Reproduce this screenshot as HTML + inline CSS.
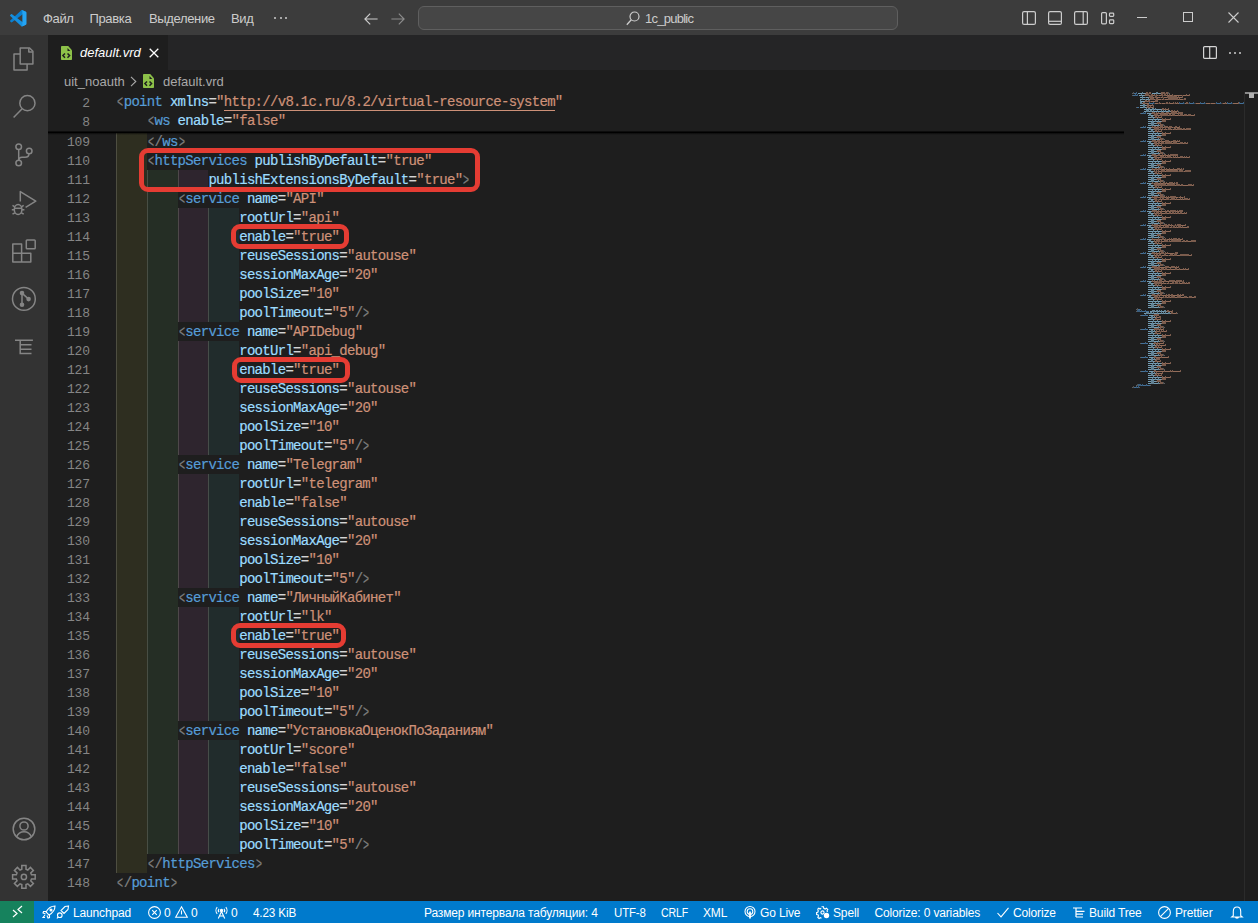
<!DOCTYPE html>
<html><head><meta charset="utf-8"><title>default.vrd</title><style>
*{box-sizing:border-box}
body{margin:0;width:1258px;height:923px;overflow:hidden;background:#1e1e1e;position:relative;font-family:"Liberation Sans",sans-serif}
.a{position:absolute}
.ui{position:absolute;white-space:nowrap;font-family:"Liberation Sans",sans-serif}
.cd{position:absolute;left:116px;-webkit-text-stroke:0.2px currentColor;white-space:pre;font:14px/19px "Liberation Mono",monospace;letter-spacing:-0.703px;color:#d4d4d4}
.ln{position:absolute;left:47px;width:43px;text-align:right;font:13px/19px "Liberation Mono",monospace;letter-spacing:-0.103px;color:#858585;white-space:pre}
.g{font-style:normal;display:inline-block;transform:translateY(0.7px) scale(0.72,1.2)}
.rb{position:absolute;border:5px solid #e53c33;border-radius:9px}
svg{position:absolute;overflow:visible}
</style></head><body>

<div class="a" style="left:0;top:0;width:1258px;height:35px;background:#3c3c3c"></div>
<svg style="left:10px;top:10px" width="16.5" height="16.5" viewBox="0 0 100 100">
<path d="M96.46 10.8L75.86 0.87C73.48 -0.28 70.63 0.2 68.76 2.07L1.36 63.58C-0.45 65.24 -0.45 68.1 1.37 69.75L6.88 74.76C8.36 76.1 10.6 76.2 12.19 74.99L93.39 13.39C96.1 11.33 100 13.27 100 16.68V16.44C100 14.04 98.62 11.84 96.46 10.8Z" fill="#0a7fd0"/>
<path d="M96.46 89.2L75.86 99.12C73.48 100.27 70.63 99.78 68.76 97.92L1.36 36.42C-0.45 34.76 -0.45 31.9 1.37 30.25L6.88 25.24C8.36 23.9 10.6 23.8 12.19 25.01L93.39 86.61C96.1 88.67 100 86.73 100 83.32V83.56C100 85.96 98.62 88.16 96.46 89.2Z" fill="#1590e0"/>
<path d="M75.86 99.13C73.48 100.27 70.63 99.79 68.76 97.92C71.07 100.22 75 98.59 75 95.33V4.67C75 1.41 71.07 -0.22 68.76 2.08C70.63 0.21 73.48 -0.27 75.86 0.87L96.46 10.78C98.62 11.82 100 14.01 100 16.41V83.59C100 85.99 98.62 88.18 96.46 89.22L75.86 99.13Z" fill="#24a4f4"/>
</svg>
<div class="ui" style="left:43px;top:10px;font-size:13px;line-height:18px;color:#cccccc;letter-spacing:-0.35px">Файл</div>
<div class="ui" style="left:89.5px;top:10px;font-size:13px;line-height:18px;color:#cccccc;letter-spacing:-0.35px">Правка</div>
<div class="ui" style="left:149px;top:10px;font-size:13px;line-height:18px;color:#cccccc;letter-spacing:-0.35px">Выделение</div>
<div class="ui" style="left:231px;top:10px;font-size:13px;line-height:18px;color:#cccccc;letter-spacing:-0.35px">Вид</div>
<div class="a" style="left:274px;top:17px;width:2px;height:2px;background:#cccccc;border-radius:1px"></div>
<div class="a" style="left:279.5px;top:17px;width:2px;height:2px;background:#cccccc;border-radius:1px"></div>
<div class="a" style="left:285px;top:17px;width:2px;height:2px;background:#cccccc;border-radius:1px"></div>
<svg style="left:364px;top:12.5px" width="14" height="12" viewBox="0 0 14 12"><path d="M0.9 6H13.6 M6.2 0.7L0.9 6L6.2 11.3" stroke="#cccccc" stroke-width="1.15" fill="none"/></svg>
<svg style="left:390.5px;top:12.5px" width="14" height="12" viewBox="0 0 14 12"><path d="M0.4 6H13.1 M7.8 0.7L13.1 6L7.8 11.3" stroke="#8c8c8c" stroke-width="1.15" fill="none"/></svg>
<div class="a" style="left:418px;top:6px;width:480px;height:24px;background:#464646;border:1px solid #5f5f5f;border-radius:6px"></div>
<svg style="left:626px;top:11px" width="14" height="15" viewBox="0 0 14 15"><circle cx="8.5" cy="5.5" r="4.5" stroke="#cccccc" stroke-width="1.2" fill="none"/><path d="M5.3 8.8L0.8 13.8" stroke="#cccccc" stroke-width="1.3"/></svg>
<div class="ui" style="left:645px;top:10px;font-size:13px;line-height:18px;color:#cccccc;letter-spacing:-0.75px">1c_public</div>
<svg style="left:1022px;top:11px" width="14" height="14" viewBox="0 0 14 14" fill="none" stroke="#cccccc" stroke-width="1.2"><rect x="0.6" y="0.6" width="12.8" height="12.8" rx="1.5"/><path d="M5.4 0.6V13.4"/></svg>
<svg style="left:1048px;top:11px" width="14" height="14" viewBox="0 0 14 14" fill="none" stroke="#cccccc" stroke-width="1.2"><rect x="0.6" y="0.6" width="12.8" height="12.8" rx="1.5"/><path d="M0.6 10.3H13.4"/></svg>
<svg style="left:1074px;top:11px" width="14" height="14" viewBox="0 0 14 14" fill="none" stroke="#cccccc" stroke-width="1.2"><rect x="0.6" y="0.6" width="12.8" height="12.8" rx="1.5"/><path d="M9.2 0.6V13.4"/></svg>
<svg style="left:1101px;top:11px" width="14" height="14" viewBox="0 0 14 14" fill="none" stroke="#cccccc" stroke-width="1.2"><rect x="0.6" y="1.6" width="4.8" height="11.2" rx="1"/><rect x="8.5" y="2.1" width="4.2" height="3.2" rx="0.8"/><rect x="8.5" y="8.8" width="4.2" height="3.8" rx="0.8"/></svg>
<div class="a" style="left:1137px;top:17px;width:10px;height:1px;background:#cccccc"></div>
<div class="a" style="left:1183px;top:12px;width:10px;height:10px;border:1px solid #cccccc"></div>
<svg style="left:1228px;top:12px" width="11" height="11" viewBox="0 0 11 11"><path d="M0.5 0.5L10.5 10.5M10.5 0.5L0.5 10.5" stroke="#cccccc" stroke-width="1.1"/></svg>
<div class="a" style="left:0;top:35px;width:48px;height:866px;background:#333333"></div>
<svg style="left:0;top:0" width="48" height="923" viewBox="0 0 48 923" fill="none" stroke="#858585" stroke-width="1.5" stroke-linejoin="round"><path d="M20.2 48H29.6L32.9 51.3V64H20.2Z"/><path d="M28.8 48.2V52H32.7"/><path d="M20.2 54.1H14V69.9H27.1V64"/><circle cx="27.4" cy="103.2" r="7.6"/><path d="M21.9 108.9L13.6 117.6"/><circle cx="18.7" cy="146.7" r="2.8"/><circle cx="29.2" cy="151" r="2.8"/><circle cx="18.7" cy="163" r="2.8"/><path d="M18.7 149.5V160.2"/><path d="M29 153.8C29 156.5 27.5 157.3 25 157.3H22C20 157.3 18.9 158.3 18.8 160"/><path d="M20.3 201.5V191.6L35.8 201.2L25.6 207.3"/><ellipse cx="18.1" cy="209.5" rx="3.8" ry="5"/><path d="M14.3 208.3H21.9"/><path d="M11.8 209.8H14.3 M21.9 209.8H24.4 M12.5 205.4L14.8 206.8 M23.7 205.4L21.4 206.8 M12.5 214.2L14.8 212.8 M23.7 214.2L21.4 212.8"/><rect x="26.3" y="240" width="8.9" height="8.8" rx="0.8"/><path d="M12.8 244.1H21.6V253.3H30.8V262H12.8Z M12.8 253.3H21.6V262"/><circle cx="23.9" cy="298.9" r="11.4"/><path d="M22 293.1V304.8 M22 293.1L28.6 299.1"/></svg>
<svg style="left:0;top:0" width="48" height="923" viewBox="0 0 48 923" fill="#858585"><circle cx="22" cy="293.1" r="2.3"/><circle cx="28.6" cy="299.1" r="2.3"/><circle cx="22" cy="304.8" r="2.3"/></svg>
<svg style="left:0;top:0" width="48" height="923" viewBox="0 0 48 923" fill="none" stroke="#858585" stroke-width="1.5"><path d="M15 340.3H32.9 M20.2 340.3V354.2 M20.2 344.8H31.5 M20.2 349.3H31.5 M20.2 353.6H31.5"/><circle cx="24" cy="829" r="10.8"/><circle cx="24" cy="826" r="4.1"/><path d="M16.5 837C18 833.3 21 831.8 24 831.8C27 831.8 30 833.3 31.5 837"/><polygon stroke-linejoin="miter" points="21.80,869.30 21.80,865.60 26.00,865.60 26.00,869.30 27.79,870.04 30.41,867.42 33.38,870.39 30.76,873.01 31.50,874.80 35.20,874.80 35.20,879.00 31.50,879.00 30.76,880.79 33.38,883.41 30.41,886.38 27.79,883.76 26.00,884.50 26.00,888.20 21.80,888.20 21.80,884.50 20.01,883.76 17.39,886.38 14.42,883.41 17.04,880.79 16.30,879.00 12.60,879.00 12.60,874.80 16.30,874.80 17.04,873.01 14.42,870.39 17.39,867.42 20.01,870.04"/><circle cx="23.9" cy="876.9" r="2.6"/></svg>
<div class="a" style="left:48px;top:35px;width:1210px;height:35px;background:#252526"></div>
<div class="a" style="left:48px;top:35px;width:120px;height:35px;background:#1e1e1e"></div>
<svg style="left:60.5px;top:46px" width="11" height="14" viewBox="0 0 11 14">
<path d="M0 0.8Q0 0 0.8 0H7.2L11 4.2V13.2Q11 14 10.2 14H0.8Q0 14 0 13.2Z" fill="#8dc149"/>
<path d="M6.5 2.1V4.9H9.3Z" fill="#1e1e1e"/>
<path d="M4 7.4L1.9 9.6L4 11.8 M6.5 7.4L8.6 9.6L6.5 11.8" stroke="#1e1e1e" stroke-width="1.5" fill="none"/></svg>
<div class="ui" style="left:80px;top:44px;font-size:13px;line-height:18px;color:#ffffff;font-style:italic">default.vrd</div>
<svg style="left:149px;top:48px" width="10" height="10" viewBox="0 0 10 10"><path d="M0.7 0.7L9.3 9.3M9.3 0.7L0.7 9.3" stroke="#ffffff" stroke-width="1.3"/></svg>
<svg style="left:1203px;top:46px" width="14" height="13" viewBox="0 0 14 13" fill="none" stroke="#d4d4d4" stroke-width="1.2">
<rect x="0.6" y="0.6" width="12.8" height="11.8" rx="1"/><path d="M6.7 0.6V12.4"/></svg>
<div class="a" style="left:1229px;top:52px;width:2px;height:2px;background:#cccccc;border-radius:1px"></div>
<div class="a" style="left:1234px;top:52px;width:2px;height:2px;background:#cccccc;border-radius:1px"></div>
<div class="a" style="left:1239px;top:52px;width:2px;height:2px;background:#cccccc;border-radius:1px"></div>
<div class="ui" style="left:64px;top:72.5px;font-size:13px;line-height:18px;color:#a9a9a9">uit_noauth</div>
<svg style="left:130px;top:76px" width="7" height="11" viewBox="0 0 7 11"><path d="M1 0.8L5.8 5.5L1 10.2" stroke="#a9a9a9" stroke-width="1.1" fill="none"/></svg>
<svg style="left:143px;top:74px" width="11" height="14" viewBox="0 0 11 14">
<path d="M0 0.8Q0 0 0.8 0H7.2L11 4.2V13.2Q11 14 10.2 14H0.8Q0 14 0 13.2Z" fill="#8dc149"/>
<path d="M6.5 2.1V4.9H9.3Z" fill="#1e1e1e"/>
<path d="M4 7.4L1.9 9.6L4 11.8 M6.5 7.4L8.6 9.6L6.5 11.8" stroke="#1e1e1e" stroke-width="1.5" fill="none"/></svg>
<div class="ui" style="left:163px;top:72.5px;font-size:13px;line-height:18px;color:#a9a9a9">default.vrd</div>
<div class="a" style="left:116.00px;top:131.50px;width:30.79px;height:19px;background:#2e2e20"></div>
<div class="a" style="left:116.00px;top:131.50px;width:1px;height:19px;background:rgba(135,135,125,0.36)"></div>
<div class="a" style="left:116.00px;top:150.50px;width:30.79px;height:19px;background:#2e2e20"></div>
<div class="a" style="left:116.00px;top:150.50px;width:1px;height:19px;background:rgba(135,135,125,0.36)"></div>
<div class="a" style="left:116.00px;top:169.50px;width:30.79px;height:19px;background:#2e2e20"></div>
<div class="a" style="left:116.00px;top:169.50px;width:1px;height:19px;background:rgba(135,135,125,0.36)"></div>
<div class="a" style="left:146.79px;top:169.50px;width:30.79px;height:19px;background:#252e25"></div>
<div class="a" style="left:146.79px;top:169.50px;width:1px;height:19px;background:rgba(135,135,125,0.36)"></div>
<div class="a" style="left:177.58px;top:169.50px;width:30.79px;height:19px;background:#2e252e"></div>
<div class="a" style="left:177.58px;top:169.50px;width:1px;height:19px;background:rgba(135,135,125,0.36)"></div>
<div class="a" style="left:116.00px;top:188.50px;width:30.79px;height:19px;background:#2e2e20"></div>
<div class="a" style="left:116.00px;top:188.50px;width:1px;height:19px;background:rgba(135,135,125,0.36)"></div>
<div class="a" style="left:146.79px;top:188.50px;width:30.79px;height:19px;background:#252e25"></div>
<div class="a" style="left:146.79px;top:188.50px;width:1px;height:19px;background:rgba(135,135,125,0.36)"></div>
<div class="a" style="left:116.00px;top:207.50px;width:30.79px;height:19px;background:#2e2e20"></div>
<div class="a" style="left:116.00px;top:207.50px;width:1px;height:19px;background:rgba(135,135,125,0.36)"></div>
<div class="a" style="left:146.79px;top:207.50px;width:30.79px;height:19px;background:#252e25"></div>
<div class="a" style="left:146.79px;top:207.50px;width:1px;height:19px;background:rgba(135,135,125,0.36)"></div>
<div class="a" style="left:177.58px;top:207.50px;width:30.79px;height:19px;background:#2e252e"></div>
<div class="a" style="left:177.58px;top:207.50px;width:1px;height:19px;background:rgba(135,135,125,0.36)"></div>
<div class="a" style="left:208.36px;top:207.50px;width:30.79px;height:19px;background:#212c2c"></div>
<div class="a" style="left:208.36px;top:207.50px;width:1px;height:19px;background:rgba(135,135,125,0.36)"></div>
<div class="a" style="left:116.00px;top:226.50px;width:30.79px;height:19px;background:#2e2e20"></div>
<div class="a" style="left:116.00px;top:226.50px;width:1px;height:19px;background:rgba(135,135,125,0.36)"></div>
<div class="a" style="left:146.79px;top:226.50px;width:30.79px;height:19px;background:#252e25"></div>
<div class="a" style="left:146.79px;top:226.50px;width:1px;height:19px;background:rgba(135,135,125,0.36)"></div>
<div class="a" style="left:177.58px;top:226.50px;width:30.79px;height:19px;background:#2e252e"></div>
<div class="a" style="left:177.58px;top:226.50px;width:1px;height:19px;background:rgba(135,135,125,0.36)"></div>
<div class="a" style="left:208.36px;top:226.50px;width:30.79px;height:19px;background:#212c2c"></div>
<div class="a" style="left:208.36px;top:226.50px;width:1px;height:19px;background:rgba(135,135,125,0.36)"></div>
<div class="a" style="left:116.00px;top:245.50px;width:30.79px;height:19px;background:#2e2e20"></div>
<div class="a" style="left:116.00px;top:245.50px;width:1px;height:19px;background:rgba(135,135,125,0.36)"></div>
<div class="a" style="left:146.79px;top:245.50px;width:30.79px;height:19px;background:#252e25"></div>
<div class="a" style="left:146.79px;top:245.50px;width:1px;height:19px;background:rgba(135,135,125,0.36)"></div>
<div class="a" style="left:177.58px;top:245.50px;width:30.79px;height:19px;background:#2e252e"></div>
<div class="a" style="left:177.58px;top:245.50px;width:1px;height:19px;background:rgba(135,135,125,0.36)"></div>
<div class="a" style="left:208.36px;top:245.50px;width:30.79px;height:19px;background:#212c2c"></div>
<div class="a" style="left:208.36px;top:245.50px;width:1px;height:19px;background:rgba(135,135,125,0.36)"></div>
<div class="a" style="left:116.00px;top:264.50px;width:30.79px;height:19px;background:#2e2e20"></div>
<div class="a" style="left:116.00px;top:264.50px;width:1px;height:19px;background:rgba(135,135,125,0.36)"></div>
<div class="a" style="left:146.79px;top:264.50px;width:30.79px;height:19px;background:#252e25"></div>
<div class="a" style="left:146.79px;top:264.50px;width:1px;height:19px;background:rgba(135,135,125,0.36)"></div>
<div class="a" style="left:177.58px;top:264.50px;width:30.79px;height:19px;background:#2e252e"></div>
<div class="a" style="left:177.58px;top:264.50px;width:1px;height:19px;background:rgba(135,135,125,0.36)"></div>
<div class="a" style="left:208.36px;top:264.50px;width:30.79px;height:19px;background:#212c2c"></div>
<div class="a" style="left:208.36px;top:264.50px;width:1px;height:19px;background:rgba(135,135,125,0.36)"></div>
<div class="a" style="left:116.00px;top:283.50px;width:30.79px;height:19px;background:#2e2e20"></div>
<div class="a" style="left:116.00px;top:283.50px;width:1px;height:19px;background:rgba(135,135,125,0.36)"></div>
<div class="a" style="left:146.79px;top:283.50px;width:30.79px;height:19px;background:#252e25"></div>
<div class="a" style="left:146.79px;top:283.50px;width:1px;height:19px;background:rgba(135,135,125,0.36)"></div>
<div class="a" style="left:177.58px;top:283.50px;width:30.79px;height:19px;background:#2e252e"></div>
<div class="a" style="left:177.58px;top:283.50px;width:1px;height:19px;background:rgba(135,135,125,0.36)"></div>
<div class="a" style="left:208.36px;top:283.50px;width:30.79px;height:19px;background:#212c2c"></div>
<div class="a" style="left:208.36px;top:283.50px;width:1px;height:19px;background:rgba(135,135,125,0.36)"></div>
<div class="a" style="left:116.00px;top:302.50px;width:30.79px;height:19px;background:#2e2e20"></div>
<div class="a" style="left:116.00px;top:302.50px;width:1px;height:19px;background:rgba(135,135,125,0.36)"></div>
<div class="a" style="left:146.79px;top:302.50px;width:30.79px;height:19px;background:#252e25"></div>
<div class="a" style="left:146.79px;top:302.50px;width:1px;height:19px;background:rgba(135,135,125,0.36)"></div>
<div class="a" style="left:177.58px;top:302.50px;width:30.79px;height:19px;background:#2e252e"></div>
<div class="a" style="left:177.58px;top:302.50px;width:1px;height:19px;background:rgba(135,135,125,0.36)"></div>
<div class="a" style="left:208.36px;top:302.50px;width:30.79px;height:19px;background:#212c2c"></div>
<div class="a" style="left:208.36px;top:302.50px;width:1px;height:19px;background:rgba(135,135,125,0.36)"></div>
<div class="a" style="left:116.00px;top:321.50px;width:30.79px;height:19px;background:#2e2e20"></div>
<div class="a" style="left:116.00px;top:321.50px;width:1px;height:19px;background:rgba(135,135,125,0.36)"></div>
<div class="a" style="left:146.79px;top:321.50px;width:30.79px;height:19px;background:#252e25"></div>
<div class="a" style="left:146.79px;top:321.50px;width:1px;height:19px;background:rgba(135,135,125,0.36)"></div>
<div class="a" style="left:116.00px;top:340.50px;width:30.79px;height:19px;background:#2e2e20"></div>
<div class="a" style="left:116.00px;top:340.50px;width:1px;height:19px;background:rgba(135,135,125,0.36)"></div>
<div class="a" style="left:146.79px;top:340.50px;width:30.79px;height:19px;background:#252e25"></div>
<div class="a" style="left:146.79px;top:340.50px;width:1px;height:19px;background:rgba(135,135,125,0.36)"></div>
<div class="a" style="left:177.58px;top:340.50px;width:30.79px;height:19px;background:#2e252e"></div>
<div class="a" style="left:177.58px;top:340.50px;width:1px;height:19px;background:rgba(135,135,125,0.36)"></div>
<div class="a" style="left:208.36px;top:340.50px;width:30.79px;height:19px;background:#212c2c"></div>
<div class="a" style="left:208.36px;top:340.50px;width:1px;height:19px;background:rgba(135,135,125,0.36)"></div>
<div class="a" style="left:116.00px;top:359.50px;width:30.79px;height:19px;background:#2e2e20"></div>
<div class="a" style="left:116.00px;top:359.50px;width:1px;height:19px;background:rgba(135,135,125,0.36)"></div>
<div class="a" style="left:146.79px;top:359.50px;width:30.79px;height:19px;background:#252e25"></div>
<div class="a" style="left:146.79px;top:359.50px;width:1px;height:19px;background:rgba(135,135,125,0.36)"></div>
<div class="a" style="left:177.58px;top:359.50px;width:30.79px;height:19px;background:#2e252e"></div>
<div class="a" style="left:177.58px;top:359.50px;width:1px;height:19px;background:rgba(135,135,125,0.36)"></div>
<div class="a" style="left:208.36px;top:359.50px;width:30.79px;height:19px;background:#212c2c"></div>
<div class="a" style="left:208.36px;top:359.50px;width:1px;height:19px;background:rgba(135,135,125,0.36)"></div>
<div class="a" style="left:116.00px;top:378.50px;width:30.79px;height:19px;background:#2e2e20"></div>
<div class="a" style="left:116.00px;top:378.50px;width:1px;height:19px;background:rgba(135,135,125,0.36)"></div>
<div class="a" style="left:146.79px;top:378.50px;width:30.79px;height:19px;background:#252e25"></div>
<div class="a" style="left:146.79px;top:378.50px;width:1px;height:19px;background:rgba(135,135,125,0.36)"></div>
<div class="a" style="left:177.58px;top:378.50px;width:30.79px;height:19px;background:#2e252e"></div>
<div class="a" style="left:177.58px;top:378.50px;width:1px;height:19px;background:rgba(135,135,125,0.36)"></div>
<div class="a" style="left:208.36px;top:378.50px;width:30.79px;height:19px;background:#212c2c"></div>
<div class="a" style="left:208.36px;top:378.50px;width:1px;height:19px;background:rgba(135,135,125,0.36)"></div>
<div class="a" style="left:116.00px;top:397.50px;width:30.79px;height:19px;background:#2e2e20"></div>
<div class="a" style="left:116.00px;top:397.50px;width:1px;height:19px;background:rgba(135,135,125,0.36)"></div>
<div class="a" style="left:146.79px;top:397.50px;width:30.79px;height:19px;background:#252e25"></div>
<div class="a" style="left:146.79px;top:397.50px;width:1px;height:19px;background:rgba(135,135,125,0.36)"></div>
<div class="a" style="left:177.58px;top:397.50px;width:30.79px;height:19px;background:#2e252e"></div>
<div class="a" style="left:177.58px;top:397.50px;width:1px;height:19px;background:rgba(135,135,125,0.36)"></div>
<div class="a" style="left:208.36px;top:397.50px;width:30.79px;height:19px;background:#212c2c"></div>
<div class="a" style="left:208.36px;top:397.50px;width:1px;height:19px;background:rgba(135,135,125,0.36)"></div>
<div class="a" style="left:116.00px;top:416.50px;width:30.79px;height:19px;background:#2e2e20"></div>
<div class="a" style="left:116.00px;top:416.50px;width:1px;height:19px;background:rgba(135,135,125,0.36)"></div>
<div class="a" style="left:146.79px;top:416.50px;width:30.79px;height:19px;background:#252e25"></div>
<div class="a" style="left:146.79px;top:416.50px;width:1px;height:19px;background:rgba(135,135,125,0.36)"></div>
<div class="a" style="left:177.58px;top:416.50px;width:30.79px;height:19px;background:#2e252e"></div>
<div class="a" style="left:177.58px;top:416.50px;width:1px;height:19px;background:rgba(135,135,125,0.36)"></div>
<div class="a" style="left:208.36px;top:416.50px;width:30.79px;height:19px;background:#212c2c"></div>
<div class="a" style="left:208.36px;top:416.50px;width:1px;height:19px;background:rgba(135,135,125,0.36)"></div>
<div class="a" style="left:116.00px;top:435.50px;width:30.79px;height:19px;background:#2e2e20"></div>
<div class="a" style="left:116.00px;top:435.50px;width:1px;height:19px;background:rgba(135,135,125,0.36)"></div>
<div class="a" style="left:146.79px;top:435.50px;width:30.79px;height:19px;background:#252e25"></div>
<div class="a" style="left:146.79px;top:435.50px;width:1px;height:19px;background:rgba(135,135,125,0.36)"></div>
<div class="a" style="left:177.58px;top:435.50px;width:30.79px;height:19px;background:#2e252e"></div>
<div class="a" style="left:177.58px;top:435.50px;width:1px;height:19px;background:rgba(135,135,125,0.36)"></div>
<div class="a" style="left:208.36px;top:435.50px;width:30.79px;height:19px;background:#212c2c"></div>
<div class="a" style="left:208.36px;top:435.50px;width:1px;height:19px;background:rgba(135,135,125,0.36)"></div>
<div class="a" style="left:116.00px;top:454.50px;width:30.79px;height:19px;background:#2e2e20"></div>
<div class="a" style="left:116.00px;top:454.50px;width:1px;height:19px;background:rgba(135,135,125,0.36)"></div>
<div class="a" style="left:146.79px;top:454.50px;width:30.79px;height:19px;background:#252e25"></div>
<div class="a" style="left:146.79px;top:454.50px;width:1px;height:19px;background:rgba(135,135,125,0.36)"></div>
<div class="a" style="left:116.00px;top:473.50px;width:30.79px;height:19px;background:#2e2e20"></div>
<div class="a" style="left:116.00px;top:473.50px;width:1px;height:19px;background:rgba(135,135,125,0.36)"></div>
<div class="a" style="left:146.79px;top:473.50px;width:30.79px;height:19px;background:#252e25"></div>
<div class="a" style="left:146.79px;top:473.50px;width:1px;height:19px;background:rgba(135,135,125,0.36)"></div>
<div class="a" style="left:177.58px;top:473.50px;width:30.79px;height:19px;background:#2e252e"></div>
<div class="a" style="left:177.58px;top:473.50px;width:1px;height:19px;background:rgba(135,135,125,0.36)"></div>
<div class="a" style="left:208.36px;top:473.50px;width:30.79px;height:19px;background:#212c2c"></div>
<div class="a" style="left:208.36px;top:473.50px;width:1px;height:19px;background:rgba(135,135,125,0.36)"></div>
<div class="a" style="left:116.00px;top:492.50px;width:30.79px;height:19px;background:#2e2e20"></div>
<div class="a" style="left:116.00px;top:492.50px;width:1px;height:19px;background:rgba(135,135,125,0.36)"></div>
<div class="a" style="left:146.79px;top:492.50px;width:30.79px;height:19px;background:#252e25"></div>
<div class="a" style="left:146.79px;top:492.50px;width:1px;height:19px;background:rgba(135,135,125,0.36)"></div>
<div class="a" style="left:177.58px;top:492.50px;width:30.79px;height:19px;background:#2e252e"></div>
<div class="a" style="left:177.58px;top:492.50px;width:1px;height:19px;background:rgba(135,135,125,0.36)"></div>
<div class="a" style="left:208.36px;top:492.50px;width:30.79px;height:19px;background:#212c2c"></div>
<div class="a" style="left:208.36px;top:492.50px;width:1px;height:19px;background:rgba(135,135,125,0.36)"></div>
<div class="a" style="left:116.00px;top:511.50px;width:30.79px;height:19px;background:#2e2e20"></div>
<div class="a" style="left:116.00px;top:511.50px;width:1px;height:19px;background:rgba(135,135,125,0.36)"></div>
<div class="a" style="left:146.79px;top:511.50px;width:30.79px;height:19px;background:#252e25"></div>
<div class="a" style="left:146.79px;top:511.50px;width:1px;height:19px;background:rgba(135,135,125,0.36)"></div>
<div class="a" style="left:177.58px;top:511.50px;width:30.79px;height:19px;background:#2e252e"></div>
<div class="a" style="left:177.58px;top:511.50px;width:1px;height:19px;background:rgba(135,135,125,0.36)"></div>
<div class="a" style="left:208.36px;top:511.50px;width:30.79px;height:19px;background:#212c2c"></div>
<div class="a" style="left:208.36px;top:511.50px;width:1px;height:19px;background:rgba(135,135,125,0.36)"></div>
<div class="a" style="left:116.00px;top:530.50px;width:30.79px;height:19px;background:#2e2e20"></div>
<div class="a" style="left:116.00px;top:530.50px;width:1px;height:19px;background:rgba(135,135,125,0.36)"></div>
<div class="a" style="left:146.79px;top:530.50px;width:30.79px;height:19px;background:#252e25"></div>
<div class="a" style="left:146.79px;top:530.50px;width:1px;height:19px;background:rgba(135,135,125,0.36)"></div>
<div class="a" style="left:177.58px;top:530.50px;width:30.79px;height:19px;background:#2e252e"></div>
<div class="a" style="left:177.58px;top:530.50px;width:1px;height:19px;background:rgba(135,135,125,0.36)"></div>
<div class="a" style="left:208.36px;top:530.50px;width:30.79px;height:19px;background:#212c2c"></div>
<div class="a" style="left:208.36px;top:530.50px;width:1px;height:19px;background:rgba(135,135,125,0.36)"></div>
<div class="a" style="left:116.00px;top:549.50px;width:30.79px;height:19px;background:#2e2e20"></div>
<div class="a" style="left:116.00px;top:549.50px;width:1px;height:19px;background:rgba(135,135,125,0.36)"></div>
<div class="a" style="left:146.79px;top:549.50px;width:30.79px;height:19px;background:#252e25"></div>
<div class="a" style="left:146.79px;top:549.50px;width:1px;height:19px;background:rgba(135,135,125,0.36)"></div>
<div class="a" style="left:177.58px;top:549.50px;width:30.79px;height:19px;background:#2e252e"></div>
<div class="a" style="left:177.58px;top:549.50px;width:1px;height:19px;background:rgba(135,135,125,0.36)"></div>
<div class="a" style="left:208.36px;top:549.50px;width:30.79px;height:19px;background:#212c2c"></div>
<div class="a" style="left:208.36px;top:549.50px;width:1px;height:19px;background:rgba(135,135,125,0.36)"></div>
<div class="a" style="left:116.00px;top:568.50px;width:30.79px;height:19px;background:#2e2e20"></div>
<div class="a" style="left:116.00px;top:568.50px;width:1px;height:19px;background:rgba(135,135,125,0.36)"></div>
<div class="a" style="left:146.79px;top:568.50px;width:30.79px;height:19px;background:#252e25"></div>
<div class="a" style="left:146.79px;top:568.50px;width:1px;height:19px;background:rgba(135,135,125,0.36)"></div>
<div class="a" style="left:177.58px;top:568.50px;width:30.79px;height:19px;background:#2e252e"></div>
<div class="a" style="left:177.58px;top:568.50px;width:1px;height:19px;background:rgba(135,135,125,0.36)"></div>
<div class="a" style="left:208.36px;top:568.50px;width:30.79px;height:19px;background:#212c2c"></div>
<div class="a" style="left:208.36px;top:568.50px;width:1px;height:19px;background:rgba(135,135,125,0.36)"></div>
<div class="a" style="left:116.00px;top:587.50px;width:30.79px;height:19px;background:#2e2e20"></div>
<div class="a" style="left:116.00px;top:587.50px;width:1px;height:19px;background:rgba(135,135,125,0.36)"></div>
<div class="a" style="left:146.79px;top:587.50px;width:30.79px;height:19px;background:#252e25"></div>
<div class="a" style="left:146.79px;top:587.50px;width:1px;height:19px;background:rgba(135,135,125,0.36)"></div>
<div class="a" style="left:116.00px;top:606.50px;width:30.79px;height:19px;background:#2e2e20"></div>
<div class="a" style="left:116.00px;top:606.50px;width:1px;height:19px;background:rgba(135,135,125,0.36)"></div>
<div class="a" style="left:146.79px;top:606.50px;width:30.79px;height:19px;background:#252e25"></div>
<div class="a" style="left:146.79px;top:606.50px;width:1px;height:19px;background:rgba(135,135,125,0.36)"></div>
<div class="a" style="left:177.58px;top:606.50px;width:30.79px;height:19px;background:#2e252e"></div>
<div class="a" style="left:177.58px;top:606.50px;width:1px;height:19px;background:rgba(135,135,125,0.36)"></div>
<div class="a" style="left:208.36px;top:606.50px;width:30.79px;height:19px;background:#212c2c"></div>
<div class="a" style="left:208.36px;top:606.50px;width:1px;height:19px;background:rgba(135,135,125,0.36)"></div>
<div class="a" style="left:116.00px;top:625.50px;width:30.79px;height:19px;background:#2e2e20"></div>
<div class="a" style="left:116.00px;top:625.50px;width:1px;height:19px;background:rgba(135,135,125,0.36)"></div>
<div class="a" style="left:146.79px;top:625.50px;width:30.79px;height:19px;background:#252e25"></div>
<div class="a" style="left:146.79px;top:625.50px;width:1px;height:19px;background:rgba(135,135,125,0.36)"></div>
<div class="a" style="left:177.58px;top:625.50px;width:30.79px;height:19px;background:#2e252e"></div>
<div class="a" style="left:177.58px;top:625.50px;width:1px;height:19px;background:rgba(135,135,125,0.36)"></div>
<div class="a" style="left:208.36px;top:625.50px;width:30.79px;height:19px;background:#212c2c"></div>
<div class="a" style="left:208.36px;top:625.50px;width:1px;height:19px;background:rgba(135,135,125,0.36)"></div>
<div class="a" style="left:116.00px;top:644.50px;width:30.79px;height:19px;background:#2e2e20"></div>
<div class="a" style="left:116.00px;top:644.50px;width:1px;height:19px;background:rgba(135,135,125,0.36)"></div>
<div class="a" style="left:146.79px;top:644.50px;width:30.79px;height:19px;background:#252e25"></div>
<div class="a" style="left:146.79px;top:644.50px;width:1px;height:19px;background:rgba(135,135,125,0.36)"></div>
<div class="a" style="left:177.58px;top:644.50px;width:30.79px;height:19px;background:#2e252e"></div>
<div class="a" style="left:177.58px;top:644.50px;width:1px;height:19px;background:rgba(135,135,125,0.36)"></div>
<div class="a" style="left:208.36px;top:644.50px;width:30.79px;height:19px;background:#212c2c"></div>
<div class="a" style="left:208.36px;top:644.50px;width:1px;height:19px;background:rgba(135,135,125,0.36)"></div>
<div class="a" style="left:116.00px;top:663.50px;width:30.79px;height:19px;background:#2e2e20"></div>
<div class="a" style="left:116.00px;top:663.50px;width:1px;height:19px;background:rgba(135,135,125,0.36)"></div>
<div class="a" style="left:146.79px;top:663.50px;width:30.79px;height:19px;background:#252e25"></div>
<div class="a" style="left:146.79px;top:663.50px;width:1px;height:19px;background:rgba(135,135,125,0.36)"></div>
<div class="a" style="left:177.58px;top:663.50px;width:30.79px;height:19px;background:#2e252e"></div>
<div class="a" style="left:177.58px;top:663.50px;width:1px;height:19px;background:rgba(135,135,125,0.36)"></div>
<div class="a" style="left:208.36px;top:663.50px;width:30.79px;height:19px;background:#212c2c"></div>
<div class="a" style="left:208.36px;top:663.50px;width:1px;height:19px;background:rgba(135,135,125,0.36)"></div>
<div class="a" style="left:116.00px;top:682.50px;width:30.79px;height:19px;background:#2e2e20"></div>
<div class="a" style="left:116.00px;top:682.50px;width:1px;height:19px;background:rgba(135,135,125,0.36)"></div>
<div class="a" style="left:146.79px;top:682.50px;width:30.79px;height:19px;background:#252e25"></div>
<div class="a" style="left:146.79px;top:682.50px;width:1px;height:19px;background:rgba(135,135,125,0.36)"></div>
<div class="a" style="left:177.58px;top:682.50px;width:30.79px;height:19px;background:#2e252e"></div>
<div class="a" style="left:177.58px;top:682.50px;width:1px;height:19px;background:rgba(135,135,125,0.36)"></div>
<div class="a" style="left:208.36px;top:682.50px;width:30.79px;height:19px;background:#212c2c"></div>
<div class="a" style="left:208.36px;top:682.50px;width:1px;height:19px;background:rgba(135,135,125,0.36)"></div>
<div class="a" style="left:116.00px;top:701.50px;width:30.79px;height:19px;background:#2e2e20"></div>
<div class="a" style="left:116.00px;top:701.50px;width:1px;height:19px;background:rgba(135,135,125,0.36)"></div>
<div class="a" style="left:146.79px;top:701.50px;width:30.79px;height:19px;background:#252e25"></div>
<div class="a" style="left:146.79px;top:701.50px;width:1px;height:19px;background:rgba(135,135,125,0.36)"></div>
<div class="a" style="left:177.58px;top:701.50px;width:30.79px;height:19px;background:#2e252e"></div>
<div class="a" style="left:177.58px;top:701.50px;width:1px;height:19px;background:rgba(135,135,125,0.36)"></div>
<div class="a" style="left:208.36px;top:701.50px;width:30.79px;height:19px;background:#212c2c"></div>
<div class="a" style="left:208.36px;top:701.50px;width:1px;height:19px;background:rgba(135,135,125,0.36)"></div>
<div class="a" style="left:116.00px;top:720.50px;width:30.79px;height:19px;background:#2e2e20"></div>
<div class="a" style="left:116.00px;top:720.50px;width:1px;height:19px;background:rgba(135,135,125,0.36)"></div>
<div class="a" style="left:146.79px;top:720.50px;width:30.79px;height:19px;background:#252e25"></div>
<div class="a" style="left:146.79px;top:720.50px;width:1px;height:19px;background:rgba(135,135,125,0.36)"></div>
<div class="a" style="left:116.00px;top:739.50px;width:30.79px;height:19px;background:#2e2e20"></div>
<div class="a" style="left:116.00px;top:739.50px;width:1px;height:19px;background:rgba(135,135,125,0.36)"></div>
<div class="a" style="left:146.79px;top:739.50px;width:30.79px;height:19px;background:#252e25"></div>
<div class="a" style="left:146.79px;top:739.50px;width:1px;height:19px;background:rgba(135,135,125,0.36)"></div>
<div class="a" style="left:177.58px;top:739.50px;width:30.79px;height:19px;background:#2e252e"></div>
<div class="a" style="left:177.58px;top:739.50px;width:1px;height:19px;background:rgba(135,135,125,0.36)"></div>
<div class="a" style="left:208.36px;top:739.50px;width:30.79px;height:19px;background:#212c2c"></div>
<div class="a" style="left:208.36px;top:739.50px;width:1px;height:19px;background:rgba(135,135,125,0.36)"></div>
<div class="a" style="left:116.00px;top:758.50px;width:30.79px;height:19px;background:#2e2e20"></div>
<div class="a" style="left:116.00px;top:758.50px;width:1px;height:19px;background:rgba(135,135,125,0.36)"></div>
<div class="a" style="left:146.79px;top:758.50px;width:30.79px;height:19px;background:#252e25"></div>
<div class="a" style="left:146.79px;top:758.50px;width:1px;height:19px;background:rgba(135,135,125,0.36)"></div>
<div class="a" style="left:177.58px;top:758.50px;width:30.79px;height:19px;background:#2e252e"></div>
<div class="a" style="left:177.58px;top:758.50px;width:1px;height:19px;background:rgba(135,135,125,0.36)"></div>
<div class="a" style="left:208.36px;top:758.50px;width:30.79px;height:19px;background:#212c2c"></div>
<div class="a" style="left:208.36px;top:758.50px;width:1px;height:19px;background:rgba(135,135,125,0.36)"></div>
<div class="a" style="left:116.00px;top:777.50px;width:30.79px;height:19px;background:#2e2e20"></div>
<div class="a" style="left:116.00px;top:777.50px;width:1px;height:19px;background:rgba(135,135,125,0.36)"></div>
<div class="a" style="left:146.79px;top:777.50px;width:30.79px;height:19px;background:#252e25"></div>
<div class="a" style="left:146.79px;top:777.50px;width:1px;height:19px;background:rgba(135,135,125,0.36)"></div>
<div class="a" style="left:177.58px;top:777.50px;width:30.79px;height:19px;background:#2e252e"></div>
<div class="a" style="left:177.58px;top:777.50px;width:1px;height:19px;background:rgba(135,135,125,0.36)"></div>
<div class="a" style="left:208.36px;top:777.50px;width:30.79px;height:19px;background:#212c2c"></div>
<div class="a" style="left:208.36px;top:777.50px;width:1px;height:19px;background:rgba(135,135,125,0.36)"></div>
<div class="a" style="left:116.00px;top:796.50px;width:30.79px;height:19px;background:#2e2e20"></div>
<div class="a" style="left:116.00px;top:796.50px;width:1px;height:19px;background:rgba(135,135,125,0.36)"></div>
<div class="a" style="left:146.79px;top:796.50px;width:30.79px;height:19px;background:#252e25"></div>
<div class="a" style="left:146.79px;top:796.50px;width:1px;height:19px;background:rgba(135,135,125,0.36)"></div>
<div class="a" style="left:177.58px;top:796.50px;width:30.79px;height:19px;background:#2e252e"></div>
<div class="a" style="left:177.58px;top:796.50px;width:1px;height:19px;background:rgba(135,135,125,0.36)"></div>
<div class="a" style="left:208.36px;top:796.50px;width:30.79px;height:19px;background:#212c2c"></div>
<div class="a" style="left:208.36px;top:796.50px;width:1px;height:19px;background:rgba(135,135,125,0.36)"></div>
<div class="a" style="left:116.00px;top:815.50px;width:30.79px;height:19px;background:#2e2e20"></div>
<div class="a" style="left:116.00px;top:815.50px;width:1px;height:19px;background:rgba(135,135,125,0.36)"></div>
<div class="a" style="left:146.79px;top:815.50px;width:30.79px;height:19px;background:#252e25"></div>
<div class="a" style="left:146.79px;top:815.50px;width:1px;height:19px;background:rgba(135,135,125,0.36)"></div>
<div class="a" style="left:177.58px;top:815.50px;width:30.79px;height:19px;background:#2e252e"></div>
<div class="a" style="left:177.58px;top:815.50px;width:1px;height:19px;background:rgba(135,135,125,0.36)"></div>
<div class="a" style="left:208.36px;top:815.50px;width:30.79px;height:19px;background:#212c2c"></div>
<div class="a" style="left:208.36px;top:815.50px;width:1px;height:19px;background:rgba(135,135,125,0.36)"></div>
<div class="a" style="left:116.00px;top:834.50px;width:30.79px;height:19px;background:#2e2e20"></div>
<div class="a" style="left:116.00px;top:834.50px;width:1px;height:19px;background:rgba(135,135,125,0.36)"></div>
<div class="a" style="left:146.79px;top:834.50px;width:30.79px;height:19px;background:#252e25"></div>
<div class="a" style="left:146.79px;top:834.50px;width:1px;height:19px;background:rgba(135,135,125,0.36)"></div>
<div class="a" style="left:177.58px;top:834.50px;width:30.79px;height:19px;background:#2e252e"></div>
<div class="a" style="left:177.58px;top:834.50px;width:1px;height:19px;background:rgba(135,135,125,0.36)"></div>
<div class="a" style="left:208.36px;top:834.50px;width:30.79px;height:19px;background:#212c2c"></div>
<div class="a" style="left:208.36px;top:834.50px;width:1px;height:19px;background:rgba(135,135,125,0.36)"></div>
<div class="a" style="left:116.00px;top:853.50px;width:30.79px;height:19px;background:#2e2e20"></div>
<div class="a" style="left:116.00px;top:853.50px;width:1px;height:19px;background:rgba(135,135,125,0.36)"></div>
<div class="ln" style="top:132.80px">109</div>
<div class="cd" style="top:132.90px">    <span style="color:#808080"><i class="g">&lt;</i>/</span><span style="color:#569cd6">ws</span><span style="color:#808080"><i class="g">&gt;</i></span></div>
<div class="ln" style="top:151.80px">110</div>
<div class="cd" style="top:151.90px">    <span style="color:#808080"><i class="g">&lt;</i></span><span style="color:#569cd6">httpServices</span> <span style="color:#9cdcfe">publishByDefault</span><span style="color:#d4d4d4">=</span><span style="color:#ce9178">&quot;true&quot;</span></div>
<div class="ln" style="top:170.80px">111</div>
<div class="cd" style="top:170.90px">            <span style="color:#9cdcfe">publishExtensionsByDefault</span><span style="color:#d4d4d4">=</span><span style="color:#ce9178">&quot;true&quot;</span><span style="color:#808080"><i class="g">&gt;</i></span></div>
<div class="ln" style="top:189.80px">112</div>
<div class="cd" style="top:189.90px">        <span style="color:#808080"><i class="g">&lt;</i></span><span style="color:#569cd6">service</span> <span style="color:#9cdcfe">name</span><span style="color:#d4d4d4">=</span><span style="color:#ce9178">&quot;API&quot;</span></div>
<div class="ln" style="top:208.80px">113</div>
<div class="cd" style="top:208.90px">                <span style="color:#9cdcfe">rootUrl</span><span style="color:#d4d4d4">=</span><span style="color:#ce9178">&quot;api&quot;</span></div>
<div class="ln" style="top:227.80px">114</div>
<div class="cd" style="top:227.90px">                <span style="color:#9cdcfe">enable</span><span style="color:#d4d4d4">=</span><span style="color:#ce9178">&quot;true&quot;</span></div>
<div class="ln" style="top:246.80px">115</div>
<div class="cd" style="top:246.90px">                <span style="color:#9cdcfe">reuseSessions</span><span style="color:#d4d4d4">=</span><span style="color:#ce9178">&quot;autouse&quot;</span></div>
<div class="ln" style="top:265.80px">116</div>
<div class="cd" style="top:265.90px">                <span style="color:#9cdcfe">sessionMaxAge</span><span style="color:#d4d4d4">=</span><span style="color:#ce9178">&quot;20&quot;</span></div>
<div class="ln" style="top:284.80px">117</div>
<div class="cd" style="top:284.90px">                <span style="color:#9cdcfe">poolSize</span><span style="color:#d4d4d4">=</span><span style="color:#ce9178">&quot;10&quot;</span></div>
<div class="ln" style="top:303.80px">118</div>
<div class="cd" style="top:303.90px">                <span style="color:#9cdcfe">poolTimeout</span><span style="color:#d4d4d4">=</span><span style="color:#ce9178">&quot;5&quot;</span><span style="color:#808080">/<i class="g">&gt;</i></span></div>
<div class="ln" style="top:322.80px">119</div>
<div class="cd" style="top:322.90px">        <span style="color:#808080"><i class="g">&lt;</i></span><span style="color:#569cd6">service</span> <span style="color:#9cdcfe">name</span><span style="color:#d4d4d4">=</span><span style="color:#ce9178">&quot;APIDebug&quot;</span></div>
<div class="ln" style="top:341.80px">120</div>
<div class="cd" style="top:341.90px">                <span style="color:#9cdcfe">rootUrl</span><span style="color:#d4d4d4">=</span><span style="color:#ce9178">&quot;api_debug&quot;</span></div>
<div class="ln" style="top:360.80px">121</div>
<div class="cd" style="top:360.90px">                <span style="color:#9cdcfe">enable</span><span style="color:#d4d4d4">=</span><span style="color:#ce9178">&quot;true&quot;</span></div>
<div class="ln" style="top:379.80px">122</div>
<div class="cd" style="top:379.90px">                <span style="color:#9cdcfe">reuseSessions</span><span style="color:#d4d4d4">=</span><span style="color:#ce9178">&quot;autouse&quot;</span></div>
<div class="ln" style="top:398.80px">123</div>
<div class="cd" style="top:398.90px">                <span style="color:#9cdcfe">sessionMaxAge</span><span style="color:#d4d4d4">=</span><span style="color:#ce9178">&quot;20&quot;</span></div>
<div class="ln" style="top:417.80px">124</div>
<div class="cd" style="top:417.90px">                <span style="color:#9cdcfe">poolSize</span><span style="color:#d4d4d4">=</span><span style="color:#ce9178">&quot;10&quot;</span></div>
<div class="ln" style="top:436.80px">125</div>
<div class="cd" style="top:436.90px">                <span style="color:#9cdcfe">poolTimeout</span><span style="color:#d4d4d4">=</span><span style="color:#ce9178">&quot;5&quot;</span><span style="color:#808080">/<i class="g">&gt;</i></span></div>
<div class="ln" style="top:455.80px">126</div>
<div class="cd" style="top:455.90px">        <span style="color:#808080"><i class="g">&lt;</i></span><span style="color:#569cd6">service</span> <span style="color:#9cdcfe">name</span><span style="color:#d4d4d4">=</span><span style="color:#ce9178">&quot;Telegram&quot;</span></div>
<div class="ln" style="top:474.80px">127</div>
<div class="cd" style="top:474.90px">                <span style="color:#9cdcfe">rootUrl</span><span style="color:#d4d4d4">=</span><span style="color:#ce9178">&quot;telegram&quot;</span></div>
<div class="ln" style="top:493.80px">128</div>
<div class="cd" style="top:493.90px">                <span style="color:#9cdcfe">enable</span><span style="color:#d4d4d4">=</span><span style="color:#ce9178">&quot;false&quot;</span></div>
<div class="ln" style="top:512.80px">129</div>
<div class="cd" style="top:512.90px">                <span style="color:#9cdcfe">reuseSessions</span><span style="color:#d4d4d4">=</span><span style="color:#ce9178">&quot;autouse&quot;</span></div>
<div class="ln" style="top:531.80px">130</div>
<div class="cd" style="top:531.90px">                <span style="color:#9cdcfe">sessionMaxAge</span><span style="color:#d4d4d4">=</span><span style="color:#ce9178">&quot;20&quot;</span></div>
<div class="ln" style="top:550.80px">131</div>
<div class="cd" style="top:550.90px">                <span style="color:#9cdcfe">poolSize</span><span style="color:#d4d4d4">=</span><span style="color:#ce9178">&quot;10&quot;</span></div>
<div class="ln" style="top:569.80px">132</div>
<div class="cd" style="top:569.90px">                <span style="color:#9cdcfe">poolTimeout</span><span style="color:#d4d4d4">=</span><span style="color:#ce9178">&quot;5&quot;</span><span style="color:#808080">/<i class="g">&gt;</i></span></div>
<div class="ln" style="top:588.80px">133</div>
<div class="cd" style="top:588.90px">        <span style="color:#808080"><i class="g">&lt;</i></span><span style="color:#569cd6">service</span> <span style="color:#9cdcfe">name</span><span style="color:#d4d4d4">=</span><span style="color:#ce9178">&quot;ЛичныйКабинет&quot;</span></div>
<div class="ln" style="top:607.80px">134</div>
<div class="cd" style="top:607.90px">                <span style="color:#9cdcfe">rootUrl</span><span style="color:#d4d4d4">=</span><span style="color:#ce9178">&quot;lk&quot;</span></div>
<div class="ln" style="top:626.80px">135</div>
<div class="cd" style="top:626.90px">                <span style="color:#9cdcfe">enable</span><span style="color:#d4d4d4">=</span><span style="color:#ce9178">&quot;true&quot;</span></div>
<div class="ln" style="top:645.80px">136</div>
<div class="cd" style="top:645.90px">                <span style="color:#9cdcfe">reuseSessions</span><span style="color:#d4d4d4">=</span><span style="color:#ce9178">&quot;autouse&quot;</span></div>
<div class="ln" style="top:664.80px">137</div>
<div class="cd" style="top:664.90px">                <span style="color:#9cdcfe">sessionMaxAge</span><span style="color:#d4d4d4">=</span><span style="color:#ce9178">&quot;20&quot;</span></div>
<div class="ln" style="top:683.80px">138</div>
<div class="cd" style="top:683.90px">                <span style="color:#9cdcfe">poolSize</span><span style="color:#d4d4d4">=</span><span style="color:#ce9178">&quot;10&quot;</span></div>
<div class="ln" style="top:702.80px">139</div>
<div class="cd" style="top:702.90px">                <span style="color:#9cdcfe">poolTimeout</span><span style="color:#d4d4d4">=</span><span style="color:#ce9178">&quot;5&quot;</span><span style="color:#808080">/<i class="g">&gt;</i></span></div>
<div class="ln" style="top:721.80px">140</div>
<div class="cd" style="top:721.90px">        <span style="color:#808080"><i class="g">&lt;</i></span><span style="color:#569cd6">service</span> <span style="color:#9cdcfe">name</span><span style="color:#d4d4d4">=</span><span style="color:#ce9178">&quot;УстановкаОценокПоЗаданиям&quot;</span></div>
<div class="ln" style="top:740.80px">141</div>
<div class="cd" style="top:740.90px">                <span style="color:#9cdcfe">rootUrl</span><span style="color:#d4d4d4">=</span><span style="color:#ce9178">&quot;score&quot;</span></div>
<div class="ln" style="top:759.80px">142</div>
<div class="cd" style="top:759.90px">                <span style="color:#9cdcfe">enable</span><span style="color:#d4d4d4">=</span><span style="color:#ce9178">&quot;false&quot;</span></div>
<div class="ln" style="top:778.80px">143</div>
<div class="cd" style="top:778.90px">                <span style="color:#9cdcfe">reuseSessions</span><span style="color:#d4d4d4">=</span><span style="color:#ce9178">&quot;autouse&quot;</span></div>
<div class="ln" style="top:797.80px">144</div>
<div class="cd" style="top:797.90px">                <span style="color:#9cdcfe">sessionMaxAge</span><span style="color:#d4d4d4">=</span><span style="color:#ce9178">&quot;20&quot;</span></div>
<div class="ln" style="top:816.80px">145</div>
<div class="cd" style="top:816.90px">                <span style="color:#9cdcfe">poolSize</span><span style="color:#d4d4d4">=</span><span style="color:#ce9178">&quot;10&quot;</span></div>
<div class="ln" style="top:835.80px">146</div>
<div class="cd" style="top:835.90px">                <span style="color:#9cdcfe">poolTimeout</span><span style="color:#d4d4d4">=</span><span style="color:#ce9178">&quot;5&quot;</span><span style="color:#808080">/<i class="g">&gt;</i></span></div>
<div class="ln" style="top:854.80px">147</div>
<div class="cd" style="top:854.90px">    <span style="color:#808080"><i class="g">&lt;</i>/</span><span style="color:#569cd6">httpServices</span><span style="color:#808080"><i class="g">&gt;</i></span></div>
<div class="ln" style="top:873.80px">148</div>
<div class="cd" style="top:873.90px"><span style="color:#808080"><i class="g">&lt;</i>/</span><span style="color:#569cd6">point</span><span style="color:#808080"><i class="g">&gt;</i></span></div>
<div class="a" style="left:48px;top:92px;width:1076px;height:39px;background:#1e1e1e"></div>
<div class="a" style="left:48px;top:131px;width:1076px;height:1px;background:rgba(0,0,0,0.55)"></div>
<div class="a" style="left:48px;top:132px;width:1076px;height:1px;background:#000000"></div>
<div class="a" style="left:48px;top:133px;width:1076px;height:2px;background:linear-gradient(rgba(0,0,0,0.6),rgba(0,0,0,0))"></div>
<div class="ln" style="top:93.80px">2</div>
<div class="cd" style="top:92.80px"><span style="color:#808080"><i class="g">&lt;</i></span><span style="color:#569cd6">point</span> <span style="color:#9cdcfe">xmlns</span><span style="color:#d4d4d4">=</span><span style="color:#ce9178">&quot;http://v8.1c.ru/8.2/virtual-resource-system&quot;</span></div>
<div class="ln" style="top:112.80px">8</div>
<div class="cd" style="top:111.80px">    <span style="color:#808080"><i class="g">&lt;</i></span><span style="color:#569cd6">ws</span> <span style="color:#9cdcfe">enable</span><span style="color:#d4d4d4">=</span><span style="color:#ce9178">&quot;false&quot;</span></div>
<div class="a" style="left:223.76px;top:110px;width:330.97px;height:1px;background:#ce9178"></div>
<div class="rb" style="left:139px;top:148px;width:341px;height:44px"></div>
<div class="rb" style="left:231px;top:224px;width:118px;height:25px"></div>
<div class="rb" style="left:232px;top:357px;width:118px;height:25.5px"></div>
<div class="rb" style="left:231px;top:623px;width:115px;height:25px"></div>
<div class="a" style="left:1244px;top:92px;width:1px;height:809px;background:#2b2b2b"></div>
<div class="a" style="left:1245px;top:92px;width:13px;height:2px;background:#8a8a8a"></div>
<div class="a" style="left:1249px;top:93px;width:5px;height:5px;background:#b0b0b0"></div>
<svg style="left:1125px;top:92px" width="120" height="300" viewBox="0 0 120 300" shape-rendering="crispEdges"><path fill="#6a6a6a" fill-opacity="0.85" d="M7 1h1v1h-1zM44 1h1v1h-1zM7 3h1v1h-1zM28 13h1v1h-1zM11 15h1v1h-1zM53 19h1v1h-1zM15 21h1v1h-1zM39 33h1v1h-1zM15 35h1v1h-1zM39 47h1v1h-1zM15 49h1v1h-1zM39 61h1v1h-1zM15 63h1v1h-1zM39 75h1v1h-1zM15 77h1v1h-1zM39 89h1v1h-1zM15 91h1v1h-1zM39 103h1v1h-1zM15 105h1v1h-1zM39 117h1v1h-1zM15 119h1v1h-1zM39 131h1v1h-1zM15 133h1v1h-1zM39 145h1v1h-1zM15 147h1v1h-1zM39 159h1v1h-1zM15 161h1v1h-1zM39 173h1v1h-1zM15 175h1v1h-1zM39 187h1v1h-1zM15 189h1v1h-1zM39 201h1v1h-1zM15 203h1v1h-1zM39 215h1v1h-1zM11 217h1v1h-1zM15 217h1v1h-1zM11 219h1v1h-1zM52 221h1v1h-1zM15 223h1v1h-1zM39 235h1v1h-1zM15 237h1v1h-1zM39 249h1v1h-1zM15 251h1v1h-1zM39 263h1v1h-1zM15 265h1v1h-1zM39 277h1v1h-1zM15 279h1v1h-1zM39 291h1v1h-1zM11 293h1v1h-1zM25 293h1v1h-1zM7 295h1v1h-1zM14 295h1v1h-1z"/><path fill="#6a6a6a" fill-opacity="0.68" d="M8 0h1v2h-1zM43 0h1v2h-1zM38 32h1v2h-1zM38 46h1v2h-1zM38 60h1v2h-1zM38 74h1v2h-1zM38 88h1v2h-1zM38 102h1v2h-1zM38 116h1v2h-1zM38 130h1v2h-1zM38 144h1v2h-1zM38 158h1v2h-1zM38 172h1v2h-1zM38 186h1v2h-1zM38 200h1v2h-1zM38 214h1v2h-1zM12 216h1v2h-1zM38 234h1v2h-1zM38 248h1v2h-1zM38 262h1v2h-1zM38 276h1v2h-1zM38 290h1v2h-1zM12 292h1v2h-1zM8 294h1v2h-1z"/><path fill="#4a7fae" fill-opacity="0.85" d="M9 1h2v1h-2zM8 3h2v1h-2zM11 3h1v1h-1zM25 11h3v1h-3zM55 11h3v1h-3zM65 11h3v1h-3zM76 11h3v1h-3zM92 11h3v1h-3zM103 11h3v1h-3zM115 11h3v1h-3zM12 15h2v1h-2zM16 21h2v1h-2zM19 21h1v1h-1zM16 35h2v1h-2zM19 35h1v1h-1zM16 49h2v1h-2zM19 49h1v1h-1zM16 63h2v1h-2zM19 63h1v1h-1zM16 77h2v1h-2zM19 77h1v1h-1zM16 91h2v1h-2zM19 91h1v1h-1zM16 105h2v1h-2zM19 105h1v1h-1zM16 119h2v1h-2zM19 119h1v1h-1zM16 133h2v1h-2zM19 133h1v1h-1zM16 147h2v1h-2zM19 147h1v1h-1zM16 161h2v1h-2zM19 161h1v1h-1zM16 175h2v1h-2zM19 175h1v1h-1zM16 189h2v1h-2zM19 189h1v1h-1zM16 203h2v1h-2zM19 203h1v1h-1zM13 217h2v1h-2zM15 219h1v1h-1zM17 219h3v1h-3zM21 219h3v1h-3zM16 223h4v1h-4zM21 223h2v1h-2zM16 237h4v1h-4zM21 237h2v1h-2zM16 251h4v1h-4zM21 251h2v1h-2zM16 265h4v1h-4zM21 265h2v1h-2zM16 279h4v1h-4zM21 279h2v1h-2zM16 293h1v1h-1zM18 293h3v1h-3zM22 293h3v1h-3zM9 295h2v1h-2zM12 295h1v1h-1z"/><path fill="#4a7fae" fill-opacity="0.68" d="M11 0h1v2h-1zM10 2h1v2h-1zM12 2h1v2h-1zM24 10h1v2h-1zM28 10h1v2h-1zM54 10h1v2h-1zM58 10h1v2h-1zM64 10h1v2h-1zM68 10h1v2h-1zM75 10h1v2h-1zM79 10h1v2h-1zM91 10h1v2h-1zM95 10h1v2h-1zM102 10h1v2h-1zM106 10h1v2h-1zM114 10h1v2h-1zM118 10h1v2h-1zM18 20h1v2h-1zM20 20h1v2h-1zM18 34h1v2h-1zM20 34h1v2h-1zM18 48h1v2h-1zM20 48h1v2h-1zM18 62h1v2h-1zM20 62h1v2h-1zM18 76h1v2h-1zM20 76h1v2h-1zM18 90h1v2h-1zM20 90h1v2h-1zM18 104h1v2h-1zM20 104h1v2h-1zM18 118h1v2h-1zM20 118h1v2h-1zM18 132h1v2h-1zM20 132h1v2h-1zM18 146h1v2h-1zM20 146h1v2h-1zM18 160h1v2h-1zM20 160h1v2h-1zM18 174h1v2h-1zM20 174h1v2h-1zM18 188h1v2h-1zM20 188h1v2h-1zM18 202h1v2h-1zM20 202h1v2h-1zM12 218h3v2h-3zM16 218h1v2h-1zM20 218h1v2h-1zM20 222h1v2h-1zM20 236h1v2h-1zM20 250h1v2h-1zM20 264h1v2h-1zM20 278h1v2h-1zM13 292h3v2h-3zM17 292h1v2h-1zM21 292h1v2h-1zM11 294h1v2h-1zM13 294h1v2h-1z"/><path fill="#84b4cf" fill-opacity="0.85" d="M13 1h4v1h-4zM18 1h2v1h-2zM27 1h4v1h-4zM33 1h2v1h-2zM14 3h2v1h-2zM17 3h2v1h-2zM15 5h2v1h-2zM18 5h2v1h-2zM21 5h2v1h-2zM15 7h2v1h-2zM18 7h2v1h-2zM21 7h2v1h-2zM16 9h3v1h-3zM15 13h3v1h-3zM20 13h1v1h-1zM15 15h3v1h-3zM20 15h1v1h-1zM19 17h2v1h-2zM22 17h1v1h-1zM25 17h2v1h-2zM29 17h1v1h-1zM31 17h5v1h-5zM19 19h2v1h-2zM24 19h1v1h-1zM27 19h1v1h-1zM29 19h3v1h-3zM33 19h3v1h-3zM37 19h1v1h-1zM39 19h1v1h-1zM41 19h2v1h-2zM22 21h4v1h-4zM23 23h1v1h-1zM26 23h2v1h-2zM23 25h3v1h-3zM28 25h1v1h-1zM23 27h5v1h-5zM29 27h3v1h-3zM33 27h3v1h-3zM23 29h4v1h-4zM28 29h2v1h-2zM31 29h2v1h-2zM34 29h2v1h-2zM23 31h3v1h-3zM29 31h2v1h-2zM23 33h3v1h-3zM29 33h4v1h-4zM22 35h4v1h-4zM23 37h1v1h-1zM26 37h2v1h-2zM23 39h3v1h-3zM28 39h1v1h-1zM23 41h5v1h-5zM29 41h3v1h-3zM33 41h3v1h-3zM23 43h4v1h-4zM28 43h2v1h-2zM31 43h2v1h-2zM34 43h2v1h-2zM23 45h3v1h-3zM29 45h2v1h-2zM23 47h3v1h-3zM29 47h4v1h-4zM22 49h4v1h-4zM23 51h1v1h-1zM26 51h2v1h-2zM23 53h3v1h-3zM28 53h1v1h-1zM23 55h5v1h-5zM29 55h3v1h-3zM33 55h3v1h-3zM23 57h4v1h-4zM28 57h2v1h-2zM31 57h2v1h-2zM34 57h2v1h-2zM23 59h3v1h-3zM29 59h2v1h-2zM23 61h3v1h-3zM29 61h4v1h-4zM22 63h4v1h-4zM23 65h1v1h-1zM26 65h2v1h-2zM23 67h3v1h-3zM28 67h1v1h-1zM23 69h5v1h-5zM29 69h3v1h-3zM33 69h3v1h-3zM23 71h4v1h-4zM28 71h2v1h-2zM31 71h2v1h-2zM34 71h2v1h-2zM23 73h3v1h-3zM29 73h2v1h-2zM23 75h3v1h-3zM29 75h4v1h-4zM22 77h4v1h-4zM23 79h1v1h-1zM26 79h2v1h-2zM23 81h3v1h-3zM28 81h1v1h-1zM23 83h5v1h-5zM29 83h3v1h-3zM33 83h3v1h-3zM23 85h4v1h-4zM28 85h2v1h-2zM31 85h2v1h-2zM34 85h2v1h-2zM23 87h3v1h-3zM29 87h2v1h-2zM23 89h3v1h-3zM29 89h4v1h-4zM22 91h4v1h-4zM23 93h1v1h-1zM26 93h2v1h-2zM23 95h3v1h-3zM28 95h1v1h-1zM23 97h5v1h-5zM29 97h3v1h-3zM33 97h3v1h-3zM23 99h4v1h-4zM28 99h2v1h-2zM31 99h2v1h-2zM34 99h2v1h-2zM23 101h3v1h-3zM29 101h2v1h-2zM23 103h3v1h-3zM29 103h4v1h-4zM22 105h4v1h-4zM23 107h1v1h-1zM26 107h2v1h-2zM23 109h3v1h-3zM28 109h1v1h-1zM23 111h5v1h-5zM29 111h3v1h-3zM33 111h3v1h-3zM23 113h4v1h-4zM28 113h2v1h-2zM31 113h2v1h-2zM34 113h2v1h-2zM23 115h3v1h-3zM29 115h2v1h-2zM23 117h3v1h-3zM29 117h4v1h-4zM22 119h4v1h-4zM23 121h1v1h-1zM26 121h2v1h-2zM23 123h3v1h-3zM28 123h1v1h-1zM23 125h5v1h-5zM29 125h3v1h-3zM33 125h3v1h-3zM23 127h4v1h-4zM28 127h2v1h-2zM31 127h2v1h-2zM34 127h2v1h-2zM23 129h3v1h-3zM29 129h2v1h-2zM23 131h3v1h-3zM29 131h4v1h-4zM22 133h4v1h-4zM23 135h1v1h-1zM26 135h2v1h-2zM23 137h3v1h-3zM28 137h1v1h-1zM23 139h5v1h-5zM29 139h3v1h-3zM33 139h3v1h-3zM23 141h4v1h-4zM28 141h2v1h-2zM31 141h2v1h-2zM34 141h2v1h-2zM23 143h3v1h-3zM29 143h2v1h-2zM23 145h3v1h-3zM29 145h4v1h-4zM22 147h4v1h-4zM23 149h1v1h-1zM26 149h2v1h-2zM23 151h3v1h-3zM28 151h1v1h-1zM23 153h5v1h-5zM29 153h3v1h-3zM33 153h3v1h-3zM23 155h4v1h-4zM28 155h2v1h-2zM31 155h2v1h-2zM34 155h2v1h-2zM23 157h3v1h-3zM29 157h2v1h-2zM23 159h3v1h-3zM29 159h4v1h-4zM22 161h4v1h-4zM23 163h1v1h-1zM26 163h2v1h-2zM23 165h3v1h-3zM28 165h1v1h-1zM23 167h5v1h-5zM29 167h3v1h-3zM33 167h3v1h-3zM23 169h4v1h-4zM28 169h2v1h-2zM31 169h2v1h-2zM34 169h2v1h-2zM23 171h3v1h-3zM29 171h2v1h-2zM23 173h3v1h-3zM29 173h4v1h-4zM22 175h4v1h-4zM23 177h1v1h-1zM26 177h2v1h-2zM23 179h3v1h-3zM28 179h1v1h-1zM23 181h5v1h-5zM29 181h3v1h-3zM33 181h3v1h-3zM23 183h4v1h-4zM28 183h2v1h-2zM31 183h2v1h-2zM34 183h2v1h-2zM23 185h3v1h-3zM29 185h2v1h-2zM23 187h3v1h-3zM29 187h4v1h-4zM22 189h4v1h-4zM23 191h1v1h-1zM26 191h2v1h-2zM23 193h3v1h-3zM28 193h1v1h-1zM23 195h5v1h-5zM29 195h3v1h-3zM33 195h3v1h-3zM23 197h4v1h-4zM28 197h2v1h-2zM31 197h2v1h-2zM34 197h2v1h-2zM23 199h3v1h-3zM29 199h2v1h-2zM23 201h3v1h-3zM29 201h4v1h-4zM22 203h4v1h-4zM23 205h1v1h-1zM26 205h2v1h-2zM23 207h3v1h-3zM28 207h1v1h-1zM23 209h5v1h-5zM29 209h3v1h-3zM33 209h3v1h-3zM23 211h4v1h-4zM28 211h2v1h-2zM31 211h2v1h-2zM34 211h2v1h-2zM23 213h3v1h-3zM29 213h2v1h-2zM23 215h3v1h-3zM29 215h4v1h-4zM25 219h2v1h-2zM30 219h1v1h-1zM33 219h1v1h-1zM35 219h1v1h-1zM37 219h2v1h-2zM19 221h2v1h-2zM24 221h1v1h-1zM27 221h1v1h-1zM29 221h3v1h-3zM33 221h3v1h-3zM37 221h1v1h-1zM39 221h1v1h-1zM41 221h2v1h-2zM24 223h4v1h-4zM23 225h3v1h-3zM28 225h1v1h-1zM23 227h3v1h-3zM28 227h1v1h-1zM23 229h5v1h-5zM29 229h3v1h-3zM33 229h3v1h-3zM23 231h4v1h-4zM28 231h2v1h-2zM31 231h2v1h-2zM34 231h2v1h-2zM23 233h3v1h-3zM29 233h2v1h-2zM23 235h3v1h-3zM29 235h4v1h-4zM24 237h4v1h-4zM23 239h3v1h-3zM28 239h1v1h-1zM23 241h3v1h-3zM28 241h1v1h-1zM23 243h5v1h-5zM29 243h3v1h-3zM33 243h3v1h-3zM23 245h4v1h-4zM28 245h2v1h-2zM31 245h2v1h-2zM34 245h2v1h-2zM23 247h3v1h-3zM29 247h2v1h-2zM23 249h3v1h-3zM29 249h4v1h-4zM24 251h4v1h-4zM23 253h3v1h-3zM28 253h1v1h-1zM23 255h3v1h-3zM28 255h1v1h-1zM23 257h5v1h-5zM29 257h3v1h-3zM33 257h3v1h-3zM23 259h4v1h-4zM28 259h2v1h-2zM31 259h2v1h-2zM34 259h2v1h-2zM23 261h3v1h-3zM29 261h2v1h-2zM23 263h3v1h-3zM29 263h4v1h-4zM24 265h4v1h-4zM23 267h3v1h-3zM28 267h1v1h-1zM23 269h3v1h-3zM28 269h1v1h-1zM23 271h5v1h-5zM29 271h3v1h-3zM33 271h3v1h-3zM23 273h4v1h-4zM28 273h2v1h-2zM31 273h2v1h-2zM34 273h2v1h-2zM23 275h3v1h-3zM29 275h2v1h-2zM23 277h3v1h-3zM29 277h4v1h-4zM24 279h4v1h-4zM23 281h3v1h-3zM28 281h1v1h-1zM23 283h3v1h-3zM28 283h1v1h-1zM23 285h5v1h-5zM29 285h3v1h-3zM33 285h3v1h-3zM23 287h4v1h-4zM28 287h2v1h-2zM31 287h2v1h-2zM34 287h2v1h-2zM23 289h3v1h-3zM29 289h2v1h-2zM23 291h3v1h-3zM29 291h4v1h-4z"/><path fill="#84b4cf" fill-opacity="0.68" d="M17 0h1v2h-1zM31 0h2v2h-2zM16 2h1v2h-1zM17 4h1v2h-1zM17 6h1v2h-1zM23 6h1v2h-1zM15 8h1v2h-1zM15 10h2v2h-2zM18 12h2v2h-2zM18 14h2v2h-2zM21 16h1v2h-1zM23 16h2v2h-2zM27 16h2v2h-2zM30 16h1v2h-1zM21 18h3v2h-3zM25 18h2v2h-2zM28 18h1v2h-1zM32 18h1v2h-1zM36 18h1v2h-1zM38 18h1v2h-1zM40 18h1v2h-1zM43 18h2v2h-2zM24 22h2v2h-2zM26 24h2v2h-2zM28 26h1v2h-1zM32 26h1v2h-1zM27 28h1v2h-1zM30 28h1v2h-1zM33 28h1v2h-1zM26 30h3v2h-3zM26 32h3v2h-3zM33 32h1v2h-1zM24 36h2v2h-2zM26 38h2v2h-2zM28 40h1v2h-1zM32 40h1v2h-1zM27 42h1v2h-1zM30 42h1v2h-1zM33 42h1v2h-1zM26 44h3v2h-3zM26 46h3v2h-3zM33 46h1v2h-1zM24 50h2v2h-2zM26 52h2v2h-2zM28 54h1v2h-1zM32 54h1v2h-1zM27 56h1v2h-1zM30 56h1v2h-1zM33 56h1v2h-1zM26 58h3v2h-3zM26 60h3v2h-3zM33 60h1v2h-1zM24 64h2v2h-2zM26 66h2v2h-2zM28 68h1v2h-1zM32 68h1v2h-1zM27 70h1v2h-1zM30 70h1v2h-1zM33 70h1v2h-1zM26 72h3v2h-3zM26 74h3v2h-3zM33 74h1v2h-1zM24 78h2v2h-2zM26 80h2v2h-2zM28 82h1v2h-1zM32 82h1v2h-1zM27 84h1v2h-1zM30 84h1v2h-1zM33 84h1v2h-1zM26 86h3v2h-3zM26 88h3v2h-3zM33 88h1v2h-1zM24 92h2v2h-2zM26 94h2v2h-2zM28 96h1v2h-1zM32 96h1v2h-1zM27 98h1v2h-1zM30 98h1v2h-1zM33 98h1v2h-1zM26 100h3v2h-3zM26 102h3v2h-3zM33 102h1v2h-1zM24 106h2v2h-2zM26 108h2v2h-2zM28 110h1v2h-1zM32 110h1v2h-1zM27 112h1v2h-1zM30 112h1v2h-1zM33 112h1v2h-1zM26 114h3v2h-3zM26 116h3v2h-3zM33 116h1v2h-1zM24 120h2v2h-2zM26 122h2v2h-2zM28 124h1v2h-1zM32 124h1v2h-1zM27 126h1v2h-1zM30 126h1v2h-1zM33 126h1v2h-1zM26 128h3v2h-3zM26 130h3v2h-3zM33 130h1v2h-1zM24 134h2v2h-2zM26 136h2v2h-2zM28 138h1v2h-1zM32 138h1v2h-1zM27 140h1v2h-1zM30 140h1v2h-1zM33 140h1v2h-1zM26 142h3v2h-3zM26 144h3v2h-3zM33 144h1v2h-1zM24 148h2v2h-2zM26 150h2v2h-2zM28 152h1v2h-1zM32 152h1v2h-1zM27 154h1v2h-1zM30 154h1v2h-1zM33 154h1v2h-1zM26 156h3v2h-3zM26 158h3v2h-3zM33 158h1v2h-1zM24 162h2v2h-2zM26 164h2v2h-2zM28 166h1v2h-1zM32 166h1v2h-1zM27 168h1v2h-1zM30 168h1v2h-1zM33 168h1v2h-1zM26 170h3v2h-3zM26 172h3v2h-3zM33 172h1v2h-1zM24 176h2v2h-2zM26 178h2v2h-2zM28 180h1v2h-1zM32 180h1v2h-1zM27 182h1v2h-1zM30 182h1v2h-1zM33 182h1v2h-1zM26 184h3v2h-3zM26 186h3v2h-3zM33 186h1v2h-1zM24 190h2v2h-2zM26 192h2v2h-2zM28 194h1v2h-1zM32 194h1v2h-1zM27 196h1v2h-1zM30 196h1v2h-1zM33 196h1v2h-1zM26 198h3v2h-3zM26 200h3v2h-3zM33 200h1v2h-1zM24 204h2v2h-2zM26 206h2v2h-2zM28 208h1v2h-1zM32 208h1v2h-1zM27 210h1v2h-1zM30 210h1v2h-1zM33 210h1v2h-1zM26 212h3v2h-3zM26 214h3v2h-3zM33 214h1v2h-1zM27 218h3v2h-3zM31 218h2v2h-2zM34 218h1v2h-1zM36 218h1v2h-1zM39 218h2v2h-2zM21 220h3v2h-3zM25 220h2v2h-2zM28 220h1v2h-1zM32 220h1v2h-1zM36 220h1v2h-1zM38 220h1v2h-1zM40 220h1v2h-1zM43 220h2v2h-2zM26 224h2v2h-2zM29 224h1v2h-1zM26 226h2v2h-2zM28 228h1v2h-1zM32 228h1v2h-1zM27 230h1v2h-1zM30 230h1v2h-1zM33 230h1v2h-1zM26 232h3v2h-3zM26 234h3v2h-3zM33 234h1v2h-1zM26 238h2v2h-2zM29 238h1v2h-1zM26 240h2v2h-2zM28 242h1v2h-1zM32 242h1v2h-1zM27 244h1v2h-1zM30 244h1v2h-1zM33 244h1v2h-1zM26 246h3v2h-3zM26 248h3v2h-3zM33 248h1v2h-1zM26 252h2v2h-2zM29 252h1v2h-1zM26 254h2v2h-2zM28 256h1v2h-1zM32 256h1v2h-1zM27 258h1v2h-1zM30 258h1v2h-1zM33 258h1v2h-1zM26 260h3v2h-3zM26 262h3v2h-3zM33 262h1v2h-1zM26 266h2v2h-2zM29 266h1v2h-1zM26 268h2v2h-2zM28 270h1v2h-1zM32 270h1v2h-1zM27 272h1v2h-1zM30 272h1v2h-1zM33 272h1v2h-1zM26 274h3v2h-3zM26 276h3v2h-3zM33 276h1v2h-1zM26 280h2v2h-2zM29 280h1v2h-1zM26 282h2v2h-2zM28 284h1v2h-1zM32 284h1v2h-1zM27 286h1v2h-1zM30 286h1v2h-1zM33 286h1v2h-1zM26 288h3v2h-3zM26 290h3v2h-3zM33 290h1v2h-1z"/><path fill="#9a9a9a" fill-opacity="0.85" d="M20 1h1v1h-1zM35 1h1v1h-1zM19 3h1v1h-1zM23 5h1v1h-1zM24 7h1v1h-1zM19 9h1v1h-1zM17 11h1v1h-1zM21 13h1v1h-1zM21 15h1v1h-1zM36 17h1v1h-1zM45 19h1v1h-1zM26 21h1v1h-1zM28 23h1v1h-1zM29 25h1v1h-1zM36 27h1v1h-1zM36 29h1v1h-1zM31 31h1v1h-1zM34 33h1v1h-1zM26 35h1v1h-1zM28 37h1v1h-1zM29 39h1v1h-1zM36 41h1v1h-1zM36 43h1v1h-1zM31 45h1v1h-1zM34 47h1v1h-1zM26 49h1v1h-1zM28 51h1v1h-1zM29 53h1v1h-1zM36 55h1v1h-1zM36 57h1v1h-1zM31 59h1v1h-1zM34 61h1v1h-1zM26 63h1v1h-1zM28 65h1v1h-1zM29 67h1v1h-1zM36 69h1v1h-1zM36 71h1v1h-1zM31 73h1v1h-1zM34 75h1v1h-1zM26 77h1v1h-1zM28 79h1v1h-1zM29 81h1v1h-1zM36 83h1v1h-1zM36 85h1v1h-1zM31 87h1v1h-1zM34 89h1v1h-1zM26 91h1v1h-1zM28 93h1v1h-1zM29 95h1v1h-1zM36 97h1v1h-1zM36 99h1v1h-1zM31 101h1v1h-1zM34 103h1v1h-1zM26 105h1v1h-1zM28 107h1v1h-1zM29 109h1v1h-1zM36 111h1v1h-1zM36 113h1v1h-1zM31 115h1v1h-1zM34 117h1v1h-1zM26 119h1v1h-1zM28 121h1v1h-1zM29 123h1v1h-1zM36 125h1v1h-1zM36 127h1v1h-1zM31 129h1v1h-1zM34 131h1v1h-1zM26 133h1v1h-1zM28 135h1v1h-1zM29 137h1v1h-1zM36 139h1v1h-1zM36 141h1v1h-1zM31 143h1v1h-1zM34 145h1v1h-1zM26 147h1v1h-1zM28 149h1v1h-1zM29 151h1v1h-1zM36 153h1v1h-1zM36 155h1v1h-1zM31 157h1v1h-1zM34 159h1v1h-1zM26 161h1v1h-1zM28 163h1v1h-1zM29 165h1v1h-1zM36 167h1v1h-1zM36 169h1v1h-1zM31 171h1v1h-1zM34 173h1v1h-1zM26 175h1v1h-1zM28 177h1v1h-1zM29 179h1v1h-1zM36 181h1v1h-1zM36 183h1v1h-1zM31 185h1v1h-1zM34 187h1v1h-1zM26 189h1v1h-1zM28 191h1v1h-1zM29 193h1v1h-1zM36 195h1v1h-1zM36 197h1v1h-1zM31 199h1v1h-1zM34 201h1v1h-1zM26 203h1v1h-1zM28 205h1v1h-1zM29 207h1v1h-1zM36 209h1v1h-1zM36 211h1v1h-1zM31 213h1v1h-1zM34 215h1v1h-1zM41 219h1v1h-1zM45 221h1v1h-1zM28 223h1v1h-1zM30 225h1v1h-1zM29 227h1v1h-1zM36 229h1v1h-1zM36 231h1v1h-1zM31 233h1v1h-1zM34 235h1v1h-1zM28 237h1v1h-1zM30 239h1v1h-1zM29 241h1v1h-1zM36 243h1v1h-1zM36 245h1v1h-1zM31 247h1v1h-1zM34 249h1v1h-1zM28 251h1v1h-1zM30 253h1v1h-1zM29 255h1v1h-1zM36 257h1v1h-1zM36 259h1v1h-1zM31 261h1v1h-1zM34 263h1v1h-1zM28 265h1v1h-1zM30 267h1v1h-1zM29 269h1v1h-1zM36 271h1v1h-1zM36 273h1v1h-1zM31 275h1v1h-1zM34 277h1v1h-1zM28 279h1v1h-1zM30 281h1v1h-1zM29 283h1v1h-1zM36 285h1v1h-1zM36 287h1v1h-1zM31 289h1v1h-1zM34 291h1v1h-1z"/><path fill="#a87a64" fill-opacity="0.68" d="M21 0h2v2h-2zM24 0h2v2h-2zM36 0h4v2h-4zM41 0h2v2h-2zM20 2h4v2h-4zM26 2h2v2h-2zM29 2h1v2h-1zM31 2h1v2h-1zM36 2h2v2h-2zM39 2h2v2h-2zM42 2h1v2h-1zM44 2h1v2h-1zM47 2h1v2h-1zM61 2h1v2h-1zM64 2h1v2h-1zM24 4h4v2h-4zM30 4h2v2h-2zM37 4h1v2h-1zM42 4h10v2h-10zM53 4h1v2h-1zM57 4h1v2h-1zM25 6h4v2h-4zM31 6h2v2h-2zM38 6h1v2h-1zM43 6h10v2h-10zM54 6h1v2h-1zM59 6h2v2h-2zM20 8h2v2h-2zM23 8h2v2h-2zM30 8h3v2h-3zM18 10h2v2h-2zM34 10h1v2h-1zM41 10h2v2h-2zM44 10h1v2h-1zM48 10h1v2h-1zM50 10h1v2h-1zM52 10h1v2h-1zM61 10h2v2h-2zM100 10h1v2h-1zM113 10h1v2h-1zM22 12h2v2h-2zM27 12h1v2h-1zM22 14h2v2h-2zM25 14h1v2h-1zM28 14h1v2h-1zM37 16h2v2h-2zM40 16h1v2h-1zM43 16h1v2h-1zM46 18h2v2h-2zM49 18h1v2h-1zM52 18h1v2h-1zM27 20h3v2h-3zM31 20h1v2h-1zM33 20h1v2h-1zM36 20h3v2h-3zM41 20h3v2h-3zM46 20h6v2h-6zM53 20h5v2h-5zM29 22h4v2h-4zM35 22h8v2h-8zM44 22h2v2h-2zM47 22h3v2h-3zM53 22h1v2h-1zM55 22h3v2h-3zM59 22h3v2h-3zM63 22h3v2h-3zM69 22h1v2h-1zM30 24h2v2h-2zM33 24h1v2h-1zM36 24h1v2h-1zM37 26h1v2h-1zM40 26h1v2h-1zM45 26h1v2h-1zM37 28h4v2h-4zM32 30h4v2h-4zM35 32h3v2h-3zM27 34h1v2h-1zM29 34h2v2h-2zM32 34h2v2h-2zM35 34h3v2h-3zM39 34h4v2h-4zM44 34h3v2h-3zM50 34h2v2h-2zM54 34h1v2h-1zM29 36h5v2h-5zM35 36h1v2h-1zM37 36h1v2h-1zM40 36h1v2h-1zM43 36h3v2h-3zM49 36h2v2h-2zM52 36h5v2h-5zM58 36h2v2h-2zM61 36h5v2h-5zM30 38h2v2h-2zM33 38h1v2h-1zM36 38h1v2h-1zM37 40h1v2h-1zM40 40h1v2h-1zM45 40h1v2h-1zM37 42h4v2h-4zM32 44h4v2h-4zM35 46h3v2h-3zM27 48h4v2h-4zM32 48h3v2h-3zM36 48h1v2h-1zM40 48h4v2h-4zM48 48h3v2h-3zM52 48h1v2h-1zM54 48h1v2h-1zM29 50h3v2h-3zM33 50h2v2h-2zM36 50h3v2h-3zM40 50h7v2h-7zM48 50h4v2h-4zM55 50h3v2h-3zM59 50h2v2h-2zM62 50h1v2h-1zM30 52h2v2h-2zM33 52h1v2h-1zM36 52h1v2h-1zM37 54h1v2h-1zM40 54h1v2h-1zM45 54h1v2h-1zM37 56h4v2h-4zM32 58h4v2h-4zM35 60h3v2h-3zM27 62h4v2h-4zM33 62h2v2h-2zM37 62h1v2h-1zM39 62h2v2h-2zM43 62h1v2h-1zM45 62h8v2h-8zM29 64h3v2h-3zM35 64h4v2h-4zM40 64h1v2h-1zM42 64h4v2h-4zM48 64h1v2h-1zM50 64h1v2h-1zM52 64h1v2h-1zM55 64h3v2h-3zM59 64h1v2h-1zM61 64h1v2h-1zM64 64h1v2h-1zM30 66h2v2h-2zM33 66h1v2h-1zM36 66h1v2h-1zM37 68h1v2h-1zM40 68h1v2h-1zM45 68h1v2h-1zM37 70h4v2h-4zM32 72h4v2h-4zM35 74h3v2h-3zM27 76h1v2h-1zM30 76h2v2h-2zM33 76h2v2h-2zM36 76h1v2h-1zM39 76h1v2h-1zM41 76h1v2h-1zM44 76h1v2h-1zM48 76h1v2h-1zM52 76h3v2h-3zM56 76h1v2h-1zM58 76h1v2h-1zM29 78h1v2h-1zM31 78h1v2h-1zM33 78h1v2h-1zM36 78h4v2h-4zM41 78h12v2h-12zM54 78h4v2h-4zM60 78h6v2h-6zM30 80h2v2h-2zM33 80h1v2h-1zM36 80h1v2h-1zM37 82h1v2h-1zM40 82h1v2h-1zM45 82h1v2h-1zM37 84h4v2h-4zM32 86h4v2h-4zM35 88h3v2h-3zM27 90h1v2h-1zM30 90h3v2h-3zM35 90h1v2h-1zM38 90h2v2h-2zM41 90h1v2h-1zM44 90h4v2h-4zM49 90h1v2h-1zM51 90h2v2h-2zM29 92h12v2h-12zM42 92h8v2h-8zM51 92h4v2h-4zM56 92h2v2h-2zM63 92h4v2h-4zM68 92h1v2h-1zM30 94h2v2h-2zM33 94h1v2h-1zM36 94h1v2h-1zM37 96h1v2h-1zM40 96h1v2h-1zM45 96h1v2h-1zM37 98h4v2h-4zM32 100h4v2h-4zM35 102h3v2h-3zM27 104h1v2h-1zM29 104h4v2h-4zM35 104h5v2h-5zM41 104h1v2h-1zM43 104h1v2h-1zM45 104h6v2h-6zM55 104h1v2h-1zM59 104h1v2h-1zM29 106h3v2h-3zM35 106h1v2h-1zM37 106h2v2h-2zM41 106h3v2h-3zM46 106h4v2h-4zM51 106h1v2h-1zM55 106h1v2h-1zM57 106h1v2h-1zM59 106h4v2h-4zM64 106h1v2h-1zM30 108h2v2h-2zM33 108h1v2h-1zM36 108h1v2h-1zM37 110h1v2h-1zM40 110h1v2h-1zM45 110h1v2h-1zM37 112h4v2h-4zM32 114h4v2h-4zM35 116h3v2h-3zM27 118h5v2h-5zM33 118h1v2h-1zM36 118h1v2h-1zM40 118h1v2h-1zM42 118h2v2h-2zM45 118h6v2h-6zM52 118h1v2h-1zM54 118h4v2h-4zM29 120h1v2h-1zM31 120h3v2h-3zM35 120h2v2h-2zM40 120h2v2h-2zM44 120h2v2h-2zM47 120h2v2h-2zM50 120h1v2h-1zM52 120h2v2h-2zM55 120h2v2h-2zM59 120h1v2h-1zM61 120h1v2h-1zM30 122h2v2h-2zM33 122h1v2h-1zM36 122h1v2h-1zM37 124h1v2h-1zM40 124h1v2h-1zM45 124h1v2h-1zM37 126h4v2h-4zM32 128h4v2h-4zM35 130h3v2h-3zM27 132h1v2h-1zM29 132h4v2h-4zM35 132h1v2h-1zM39 132h3v2h-3zM43 132h2v2h-2zM46 132h1v2h-1zM50 132h1v2h-1zM52 132h4v2h-4zM60 132h1v2h-1zM29 134h4v2h-4zM34 134h2v2h-2zM38 134h1v2h-1zM40 134h4v2h-4zM46 134h1v2h-1zM48 134h2v2h-2zM51 134h1v2h-1zM53 134h3v2h-3zM57 134h1v2h-1zM62 134h2v2h-2zM30 136h2v2h-2zM33 136h1v2h-1zM36 136h1v2h-1zM37 138h1v2h-1zM40 138h1v2h-1zM45 138h1v2h-1zM37 140h4v2h-4zM32 142h4v2h-4zM35 144h3v2h-3zM27 146h1v2h-1zM33 146h1v2h-1zM37 146h2v2h-2zM40 146h1v2h-1zM44 146h1v2h-1zM46 146h1v2h-1zM48 146h4v2h-4zM53 146h2v2h-2zM57 146h1v2h-1zM29 148h1v2h-1zM31 148h4v2h-4zM36 148h1v2h-1zM39 148h4v2h-4zM44 148h1v2h-1zM46 148h10v2h-10zM58 148h2v2h-2zM61 148h2v2h-2zM66 148h5v2h-5zM30 150h2v2h-2zM33 150h1v2h-1zM36 150h1v2h-1zM37 152h1v2h-1zM40 152h1v2h-1zM45 152h1v2h-1zM37 154h4v2h-4zM32 156h4v2h-4zM35 158h3v2h-3zM27 160h3v2h-3zM31 160h1v2h-1zM34 160h1v2h-1zM36 160h3v2h-3zM40 160h1v2h-1zM42 160h1v2h-1zM50 160h3v2h-3zM29 162h1v2h-1zM31 162h2v2h-2zM34 162h2v2h-2zM39 162h2v2h-2zM45 162h3v2h-3zM49 162h3v2h-3zM55 162h9v2h-9zM66 162h1v2h-1zM30 164h2v2h-2zM33 164h1v2h-1zM36 164h1v2h-1zM37 166h1v2h-1zM40 166h1v2h-1zM45 166h1v2h-1zM37 168h4v2h-4zM32 170h4v2h-4zM35 172h3v2h-3zM27 174h5v2h-5zM33 174h2v2h-2zM40 174h4v2h-4zM46 174h4v2h-4zM51 174h1v2h-1zM53 174h1v2h-1zM29 176h6v2h-6zM36 176h3v2h-3zM40 176h2v2h-2zM45 176h1v2h-1zM50 176h2v2h-2zM54 176h1v2h-1zM58 176h1v2h-1zM60 176h1v2h-1zM63 176h1v2h-1zM30 178h2v2h-2zM33 178h1v2h-1zM36 178h1v2h-1zM37 180h1v2h-1zM40 180h1v2h-1zM45 180h1v2h-1zM37 182h4v2h-4zM32 184h4v2h-4zM35 186h3v2h-3zM27 188h1v2h-1zM29 188h1v2h-1zM32 188h1v2h-1zM34 188h3v2h-3zM39 188h2v2h-2zM44 188h6v2h-6zM51 188h6v2h-6zM58 188h1v2h-1zM29 190h8v2h-8zM38 190h1v2h-1zM43 190h1v2h-1zM47 190h2v2h-2zM50 190h3v2h-3zM54 190h1v2h-1zM57 190h3v2h-3zM61 190h1v2h-1zM63 190h2v2h-2zM30 192h2v2h-2zM33 192h1v2h-1zM36 192h1v2h-1zM37 194h1v2h-1zM40 194h1v2h-1zM45 194h1v2h-1zM37 196h4v2h-4zM32 198h4v2h-4zM35 200h3v2h-3zM27 202h3v2h-3zM32 202h2v2h-2zM35 202h2v2h-2zM41 202h1v2h-1zM43 202h2v2h-2zM46 202h2v2h-2zM52 202h2v2h-2zM55 202h1v2h-1zM57 202h2v2h-2zM29 204h4v2h-4zM34 204h1v2h-1zM38 204h1v2h-1zM40 204h2v2h-2zM43 204h2v2h-2zM46 204h4v2h-4zM52 204h4v2h-4zM59 204h3v2h-3zM64 204h3v2h-3zM69 204h2v2h-2zM30 206h2v2h-2zM33 206h1v2h-1zM36 206h1v2h-1zM37 208h1v2h-1zM40 208h1v2h-1zM45 208h1v2h-1zM37 210h4v2h-4zM32 212h4v2h-4zM35 214h3v2h-3zM42 218h2v2h-2zM47 218h1v2h-1zM46 220h2v2h-2zM51 220h1v2h-1zM29 222h5v2h-5zM31 224h1v2h-1zM34 224h2v2h-2zM30 226h2v2h-2zM35 226h1v2h-1zM37 228h1v2h-1zM40 228h1v2h-1zM45 228h1v2h-1zM37 230h4v2h-4zM32 232h4v2h-4zM35 234h3v2h-3zM29 236h5v2h-5zM35 236h1v2h-1zM38 236h1v2h-1zM31 238h1v2h-1zM34 238h1v2h-1zM36 238h1v2h-1zM38 238h1v2h-1zM41 238h1v2h-1zM30 240h2v2h-2zM35 240h1v2h-1zM37 242h1v2h-1zM40 242h1v2h-1zM45 242h1v2h-1zM37 244h4v2h-4zM32 246h4v2h-4zM35 248h3v2h-3zM29 250h2v2h-2zM32 250h1v2h-1zM38 250h1v2h-1zM31 252h2v2h-2zM34 252h1v2h-1zM40 252h1v2h-1zM30 254h2v2h-2zM33 254h1v2h-1zM36 254h1v2h-1zM37 256h1v2h-1zM40 256h1v2h-1zM45 256h1v2h-1zM37 258h4v2h-4zM32 260h4v2h-4zM35 262h3v2h-3zM29 264h2v2h-2zM36 264h1v2h-1zM43 264h1v2h-1zM31 266h4v2h-4zM30 268h2v2h-2zM35 268h1v2h-1zM37 270h1v2h-1zM40 270h1v2h-1zM45 270h1v2h-1zM37 272h4v2h-4zM32 274h4v2h-4zM35 276h3v2h-3zM29 278h2v2h-2zM39 278h1v2h-1zM45 278h1v2h-1zM47 278h1v2h-1zM55 278h1v2h-1zM31 280h1v2h-1zM37 280h1v2h-1zM30 282h2v2h-2zM33 282h1v2h-1zM36 282h1v2h-1zM37 284h1v2h-1zM40 284h1v2h-1zM45 284h1v2h-1zM37 286h4v2h-4zM32 288h4v2h-4zM35 290h3v2h-3z"/><path fill="#a87a64" fill-opacity="0.45" d="M23 1h1v1h-1zM40 1h1v1h-1zM25 3h1v1h-1zM30 3h1v1h-1zM33 3h1v1h-1zM38 3h1v1h-1zM48 3h1v1h-1zM57 3h1v1h-1zM29 5h1v1h-1zM35 5h1v1h-1zM38 5h1v1h-1zM30 7h1v1h-1zM36 7h1v1h-1zM39 7h1v1h-1zM58 7h1v1h-1zM25 9h1v1h-1zM33 11h1v1h-1zM36 11h1v1h-1zM40 11h1v1h-1zM43 11h1v1h-1zM49 11h1v1h-1zM63 11h1v1h-1zM70 11h1v1h-1zM85 11h1v1h-1zM90 11h1v1h-1zM97 11h1v1h-1zM30 21h1v1h-1zM48 35h1v1h-1zM38 37h1v1h-1zM42 37h1v1h-1zM47 37h1v1h-1zM45 49h1v1h-1zM39 51h1v1h-1zM47 65h1v1h-1zM57 77h1v1h-1zM30 79h1v1h-1zM32 79h1v1h-1zM53 79h1v1h-1zM58 79h1v1h-1zM28 91h1v1h-1zM50 91h1v1h-1zM53 105h1v1h-1zM58 105h1v1h-1zM32 107h2v1h-2zM44 107h1v1h-1zM48 133h2v1h-2zM51 133h1v1h-1zM44 135h1v1h-1zM47 135h1v1h-1zM41 147h1v1h-1zM35 149h1v1h-1zM43 149h1v1h-1zM56 149h1v1h-1zM39 161h1v1h-1zM49 161h1v1h-1zM36 163h1v1h-1zM43 163h1v1h-1zM33 189h1v1h-1zM57 189h1v1h-1zM41 191h1v1h-1zM44 191h1v1h-1zM49 191h1v1h-1zM53 191h1v1h-1zM39 205h1v1h-1zM63 205h1v1h-1zM35 239h1v1h-1z"/><path fill="#a87a64" fill-opacity="0.85" d="M24 3h1v1h-1zM28 3h1v1h-1zM32 3h1v1h-1zM34 3h2v1h-2zM41 3h1v1h-1zM43 3h1v1h-1zM45 3h2v1h-2zM49 3h8v1h-8zM58 3h3v1h-3zM62 3h2v1h-2zM28 5h1v1h-1zM32 5h3v1h-3zM36 5h1v1h-1zM39 5h3v1h-3zM52 5h1v1h-1zM54 5h3v1h-3zM29 7h1v1h-1zM33 7h3v1h-3zM37 7h1v1h-1zM40 7h3v1h-3zM53 7h1v1h-1zM55 7h3v1h-3zM22 9h1v1h-1zM26 9h4v1h-4zM20 11h4v1h-4zM30 11h3v1h-3zM35 11h1v1h-1zM37 11h3v1h-3zM45 11h3v1h-3zM51 11h1v1h-1zM53 11h1v1h-1zM60 11h1v1h-1zM71 11h4v1h-4zM81 11h4v1h-4zM86 11h4v1h-4zM98 11h2v1h-2zM101 11h1v1h-1zM108 11h5v1h-5zM24 13h3v1h-3zM24 15h1v1h-1zM26 15h2v1h-2zM39 17h1v1h-1zM41 17h2v1h-2zM48 19h1v1h-1zM50 19h2v1h-2zM32 21h1v1h-1zM34 21h2v1h-2zM39 21h2v1h-2zM44 21h2v1h-2zM52 21h1v1h-1zM33 23h2v1h-2zM43 23h1v1h-1zM46 23h1v1h-1zM50 23h3v1h-3zM54 23h1v1h-1zM58 23h1v1h-1zM62 23h1v1h-1zM66 23h3v1h-3zM32 25h1v1h-1zM34 25h2v1h-2zM38 27h2v1h-2zM41 27h4v1h-4zM28 35h1v1h-1zM31 35h1v1h-1zM34 35h1v1h-1zM38 35h1v1h-1zM43 35h1v1h-1zM47 35h1v1h-1zM49 35h1v1h-1zM52 35h2v1h-2zM34 37h1v1h-1zM36 37h1v1h-1zM39 37h1v1h-1zM41 37h1v1h-1zM46 37h1v1h-1zM48 37h1v1h-1zM51 37h1v1h-1zM57 37h1v1h-1zM60 37h1v1h-1zM32 39h1v1h-1zM34 39h2v1h-2zM38 41h2v1h-2zM41 41h4v1h-4zM31 49h1v1h-1zM35 49h1v1h-1zM37 49h3v1h-3zM44 49h1v1h-1zM46 49h2v1h-2zM51 49h1v1h-1zM53 49h1v1h-1zM32 51h1v1h-1zM35 51h1v1h-1zM47 51h1v1h-1zM52 51h3v1h-3zM58 51h1v1h-1zM61 51h1v1h-1zM32 53h1v1h-1zM34 53h2v1h-2zM38 55h2v1h-2zM41 55h4v1h-4zM31 63h2v1h-2zM35 63h2v1h-2zM38 63h1v1h-1zM41 63h2v1h-2zM44 63h1v1h-1zM32 65h3v1h-3zM39 65h1v1h-1zM41 65h1v1h-1zM46 65h1v1h-1zM49 65h1v1h-1zM51 65h1v1h-1zM53 65h2v1h-2zM58 65h1v1h-1zM60 65h1v1h-1zM62 65h2v1h-2zM32 67h1v1h-1zM34 67h2v1h-2zM38 69h2v1h-2zM41 69h4v1h-4zM28 77h2v1h-2zM32 77h1v1h-1zM35 77h1v1h-1zM37 77h2v1h-2zM40 77h1v1h-1zM42 77h2v1h-2zM45 77h3v1h-3zM49 77h3v1h-3zM55 77h1v1h-1zM34 79h2v1h-2zM40 79h1v1h-1zM59 79h1v1h-1zM32 81h1v1h-1zM34 81h2v1h-2zM38 83h2v1h-2zM41 83h4v1h-4zM29 91h1v1h-1zM33 91h2v1h-2zM36 91h2v1h-2zM40 91h1v1h-1zM42 91h2v1h-2zM48 91h1v1h-1zM41 93h1v1h-1zM50 93h1v1h-1zM55 93h1v1h-1zM58 93h5v1h-5zM67 93h1v1h-1zM32 95h1v1h-1zM34 95h2v1h-2zM38 97h2v1h-2zM41 97h4v1h-4zM28 105h1v1h-1zM33 105h2v1h-2zM40 105h1v1h-1zM42 105h1v1h-1zM44 105h1v1h-1zM51 105h2v1h-2zM54 105h1v1h-1zM56 105h2v1h-2zM34 107h1v1h-1zM36 107h1v1h-1zM39 107h2v1h-2zM45 107h1v1h-1zM50 107h1v1h-1zM52 107h3v1h-3zM56 107h1v1h-1zM58 107h1v1h-1zM63 107h1v1h-1zM32 109h1v1h-1zM34 109h2v1h-2zM38 111h2v1h-2zM41 111h4v1h-4zM32 119h1v1h-1zM34 119h2v1h-2zM37 119h3v1h-3zM41 119h1v1h-1zM44 119h1v1h-1zM51 119h1v1h-1zM53 119h1v1h-1zM30 121h1v1h-1zM34 121h1v1h-1zM37 121h3v1h-3zM42 121h2v1h-2zM46 121h1v1h-1zM49 121h1v1h-1zM51 121h1v1h-1zM54 121h1v1h-1zM57 121h2v1h-2zM60 121h1v1h-1zM32 123h1v1h-1zM34 123h2v1h-2zM38 125h2v1h-2zM41 125h4v1h-4zM28 133h1v1h-1zM33 133h2v1h-2zM36 133h3v1h-3zM42 133h1v1h-1zM45 133h1v1h-1zM47 133h1v1h-1zM56 133h4v1h-4zM33 135h1v1h-1zM36 135h2v1h-2zM39 135h1v1h-1zM45 135h1v1h-1zM50 135h1v1h-1zM52 135h1v1h-1zM56 135h1v1h-1zM58 135h4v1h-4zM32 137h1v1h-1zM34 137h2v1h-2zM38 139h2v1h-2zM41 139h4v1h-4zM28 147h5v1h-5zM34 147h3v1h-3zM39 147h1v1h-1zM42 147h2v1h-2zM45 147h1v1h-1zM47 147h1v1h-1zM52 147h1v1h-1zM55 147h2v1h-2zM30 149h1v1h-1zM37 149h2v1h-2zM45 149h1v1h-1zM57 149h1v1h-1zM60 149h1v1h-1zM63 149h3v1h-3zM32 151h1v1h-1zM34 151h2v1h-2zM38 153h2v1h-2zM41 153h4v1h-4zM30 161h1v1h-1zM32 161h2v1h-2zM35 161h1v1h-1zM41 161h1v1h-1zM43 161h6v1h-6zM30 163h1v1h-1zM33 163h1v1h-1zM37 163h2v1h-2zM41 163h2v1h-2zM44 163h1v1h-1zM48 163h1v1h-1zM52 163h3v1h-3zM64 163h2v1h-2zM32 165h1v1h-1zM34 165h2v1h-2zM38 167h2v1h-2zM41 167h4v1h-4zM32 175h1v1h-1zM35 175h5v1h-5zM44 175h2v1h-2zM50 175h1v1h-1zM52 175h1v1h-1zM35 177h1v1h-1zM39 177h1v1h-1zM42 177h3v1h-3zM46 177h4v1h-4zM52 177h2v1h-2zM55 177h3v1h-3zM59 177h1v1h-1zM61 177h2v1h-2zM32 179h1v1h-1zM34 179h2v1h-2zM38 181h2v1h-2zM41 181h4v1h-4zM28 189h1v1h-1zM30 189h2v1h-2zM37 189h2v1h-2zM41 189h3v1h-3zM50 189h1v1h-1zM37 191h1v1h-1zM39 191h2v1h-2zM42 191h1v1h-1zM45 191h2v1h-2zM55 191h2v1h-2zM60 191h1v1h-1zM62 191h1v1h-1zM32 193h1v1h-1zM34 193h2v1h-2zM38 195h2v1h-2zM41 195h4v1h-4zM30 203h2v1h-2zM34 203h1v1h-1zM37 203h4v1h-4zM42 203h1v1h-1zM45 203h1v1h-1zM48 203h4v1h-4zM54 203h1v1h-1zM56 203h1v1h-1zM33 205h1v1h-1zM35 205h3v1h-3zM42 205h1v1h-1zM45 205h1v1h-1zM50 205h2v1h-2zM56 205h3v1h-3zM62 205h1v1h-1zM67 205h2v1h-2zM32 207h1v1h-1zM34 207h2v1h-2zM38 209h2v1h-2zM41 209h4v1h-4zM44 219h3v1h-3zM48 221h3v1h-3zM32 225h2v1h-2zM32 227h3v1h-3zM38 229h2v1h-2zM41 229h4v1h-4zM34 237h1v1h-1zM36 237h2v1h-2zM32 239h2v1h-2zM37 239h1v1h-1zM39 239h2v1h-2zM32 241h3v1h-3zM38 243h2v1h-2zM41 243h4v1h-4zM31 251h1v1h-1zM33 251h5v1h-5zM33 253h1v1h-1zM35 253h5v1h-5zM32 255h1v1h-1zM34 255h2v1h-2zM38 257h2v1h-2zM41 257h4v1h-4zM31 265h5v1h-5zM37 265h6v1h-6zM32 269h3v1h-3zM38 271h2v1h-2zM41 271h4v1h-4zM31 279h8v1h-8zM40 279h5v1h-5zM46 279h1v1h-1zM48 279h7v1h-7zM32 281h5v1h-5zM32 283h1v1h-1zM34 283h2v1h-2zM38 285h2v1h-2zM41 285h4v1h-4z"/><path fill="#84b4cf" fill-opacity="0.45" d="M20 5h1v1h-1zM20 7h1v1h-1z"/><path fill="#4a7fae" fill-opacity="0.45" d="M29 11h1v1h-1zM59 11h1v1h-1zM69 11h1v1h-1zM80 11h1v1h-1zM96 11h1v1h-1zM107 11h1v1h-1z"/></svg>
<div class="a" style="left:0;top:901px;width:1258px;height:22px;background:#007acc"></div>
<div class="a" style="left:0;top:901px;width:34px;height:22px;background:#16825d"></div>
<svg style="left:12px;top:905px" width="11" height="13" viewBox="0 0 11 13"><path d="M1 5L5 8.5L1 12 M10 1L6 4.5L10 8" stroke="#ffffff" stroke-width="1.2" fill="none"/></svg>
<div class="ui" style="left:73px;font-size:12px;line-height:16px;color:#ffffff;top:905px;letter-spacing:-0.15px">Launchpad</div>
<div class="ui" style="left:164px;font-size:12px;line-height:16px;color:#ffffff;top:905px;letter-spacing:-0.15px">0</div>
<div class="ui" style="left:191px;font-size:12px;line-height:16px;color:#ffffff;top:905px;letter-spacing:-0.15px">0</div>
<div class="ui" style="left:231px;font-size:12px;line-height:16px;color:#ffffff;top:905px;letter-spacing:-0.15px">0</div>
<div class="ui" style="left:253px;font-size:12px;line-height:16px;color:#ffffff;top:905px;letter-spacing:-0.15px;transform:scaleX(0.975);transform-origin:0 0">4.23 KiB</div>
<div class="ui" style="left:424px;font-size:12px;line-height:16px;color:#ffffff;top:905px;letter-spacing:-0.15px">Размер интервала табуляции: 4</div>
<div class="ui" style="left:614px;font-size:12px;line-height:16px;color:#ffffff;top:905px;letter-spacing:-0.15px;transform:scaleX(0.955);transform-origin:0 0">UTF-8</div>
<div class="ui" style="left:661px;font-size:12px;line-height:16px;color:#ffffff;top:905px;letter-spacing:-0.15px;transform:scaleX(0.88);transform-origin:0 0">CRLF</div>
<div class="ui" style="left:703px;font-size:12px;line-height:16px;color:#ffffff;top:905px;letter-spacing:-0.15px">XML</div>
<div class="ui" style="left:760px;font-size:12px;line-height:16px;color:#ffffff;top:905px;letter-spacing:-0.15px">Go Live</div>
<div class="ui" style="left:833px;font-size:12px;line-height:16px;color:#ffffff;top:905px;letter-spacing:-0.15px">Spell</div>
<div class="ui" style="left:874.5px;font-size:12px;line-height:16px;color:#ffffff;top:905px;letter-spacing:-0.15px">Colorize: 0 variables</div>
<div class="ui" style="left:1013px;font-size:12px;line-height:16px;color:#ffffff;top:905px;letter-spacing:-0.15px">Colorize</div>
<div class="ui" style="left:1089px;font-size:12px;line-height:16px;color:#ffffff;top:905px;letter-spacing:-0.15px">Build Tree</div>
<div class="ui" style="left:1175px;font-size:12px;line-height:16px;color:#ffffff;top:905px;letter-spacing:-0.15px">Prettier</div>
<svg style="left:42px;top:905px" width="14" height="14" viewBox="0 0 14 14" fill="none" stroke="#fff" stroke-width="1.1">
<path d="M13 1C9 1 6 3.5 4 7L7 10C10.5 8 13 5 13 1Z"/><circle cx="9" cy="5" r="1" fill="#fff"/><path d="M4.5 6.5H1.5L1 8L3.5 9 M7.5 9.5V12.5L6 13L5 10.5 M3 10L1 12.5H3"/></svg>
<svg style="left:56px;top:905px" width="13" height="14" viewBox="0 0 13 14" fill="none" stroke="#fff" stroke-width="1.1">
<path d="M12.5 1L9 1.5L5 5.5L8 8.5L12 4.5Z"/><circle cx="3.8" cy="10.2" r="2.3"/><path d="M1 13.5L2 12"/></svg>
<svg style="left:148px;top:905.5px" width="13" height="13" viewBox="0 0 13 13" fill="none" stroke="#fff" stroke-width="1.1">
<circle cx="6.5" cy="6.5" r="5.9"/><path d="M4.2 4.2L8.8 8.8M8.8 4.2L4.2 8.8"/></svg>
<svg style="left:175px;top:905.5px" width="13" height="12" viewBox="0 0 13 12" fill="none" stroke="#fff" stroke-width="1.1">
<path d="M6.5 0.8L12.3 11.3H0.7Z"/><path d="M6.5 4.5V8.5"/></svg>
<svg style="left:215px;top:905.5px" width="13" height="13" viewBox="0 0 13 13" fill="none" stroke="#fff" stroke-width="1.1">
<path d="M2.2 1.2C0.6 3 0.6 6 2.2 7.8 M10.8 1.2C12.4 3 12.4 6 10.8 7.8 M4 2.8C3.2 3.8 3.2 5.2 4 6.2 M9 2.8C9.8 3.8 9.8 5.2 9 6.2 M6.5 5.5L3.3 12.5 M6.5 5.5L9.7 12.5 M4.5 10H8.5"/><circle cx="6.5" cy="4.5" r="1.1" fill="#fff"/></svg>
<svg style="left:744px;top:905.5px" width="12" height="13" viewBox="0 0 12 13" fill="none" stroke="#fff" stroke-width="1.1">
<circle cx="6" cy="5.5" r="5"/><circle cx="6" cy="5.5" r="2.8"/><path d="M6 5.5V12.5" stroke-width="1.8"/></svg>
<svg style="left:816px;top:905.5px" width="14" height="13" viewBox="0 0 14 13" fill="none" stroke="#fff" stroke-width="1.1">
<path d="M5.5 0.8H7.5L7.8 2.3L9.2 3L10.5 2.2L11.8 3.5L11 4.8L11.5 6 M1.5 3.5L2.8 2.2L4.1 3L5.2 2.3 M1.5 3.5L2.3 4.8L1.8 6.2L0.6 6.5V8.5L2 8.8L2.5 10L1.8 11.3L3.1 12.5L4.4 11.7L5.5 12.2"/><circle cx="6.5" cy="6.5" r="1.6"/><circle cx="10.5" cy="9.5" r="2.7" fill="#fff" stroke="none"/></svg>
<svg style="left:997px;top:907px" width="12" height="11" viewBox="0 0 12 11" fill="none" stroke="#fff" stroke-width="1.1">
<path d="M0.5 6L4 9.8L11.5 0.8"/></svg>
<svg style="left:1073px;top:907px" width="12" height="11" viewBox="0 0 12 11" fill="none" stroke="#fff" stroke-width="1.2">
<path d="M0 1H9 M3 1V10 M3 4.3H11.5 M3 7.2H10 M3 10H10"/></svg>
<svg style="left:1158px;top:905.5px" width="13" height="13" viewBox="0 0 13 13" fill="none" stroke="#fff" stroke-width="1.1">
<circle cx="6.5" cy="6.5" r="5.9"/><path d="M10.6 2.4L2.4 10.6"/></svg>
<svg style="left:1231px;top:905.5px" width="12" height="13" viewBox="0 0 12 13" fill="none" stroke="#fff" stroke-width="1.1">
<path d="M2.3 9.8V5.5C2.3 2.8 4 1 6 1C8 1 9.7 2.8 9.7 5.5V9.8L11.2 11H0.8Z M4.5 11.2C4.5 12.4 7.5 12.4 7.5 11.2"/></svg>
</body></html>
